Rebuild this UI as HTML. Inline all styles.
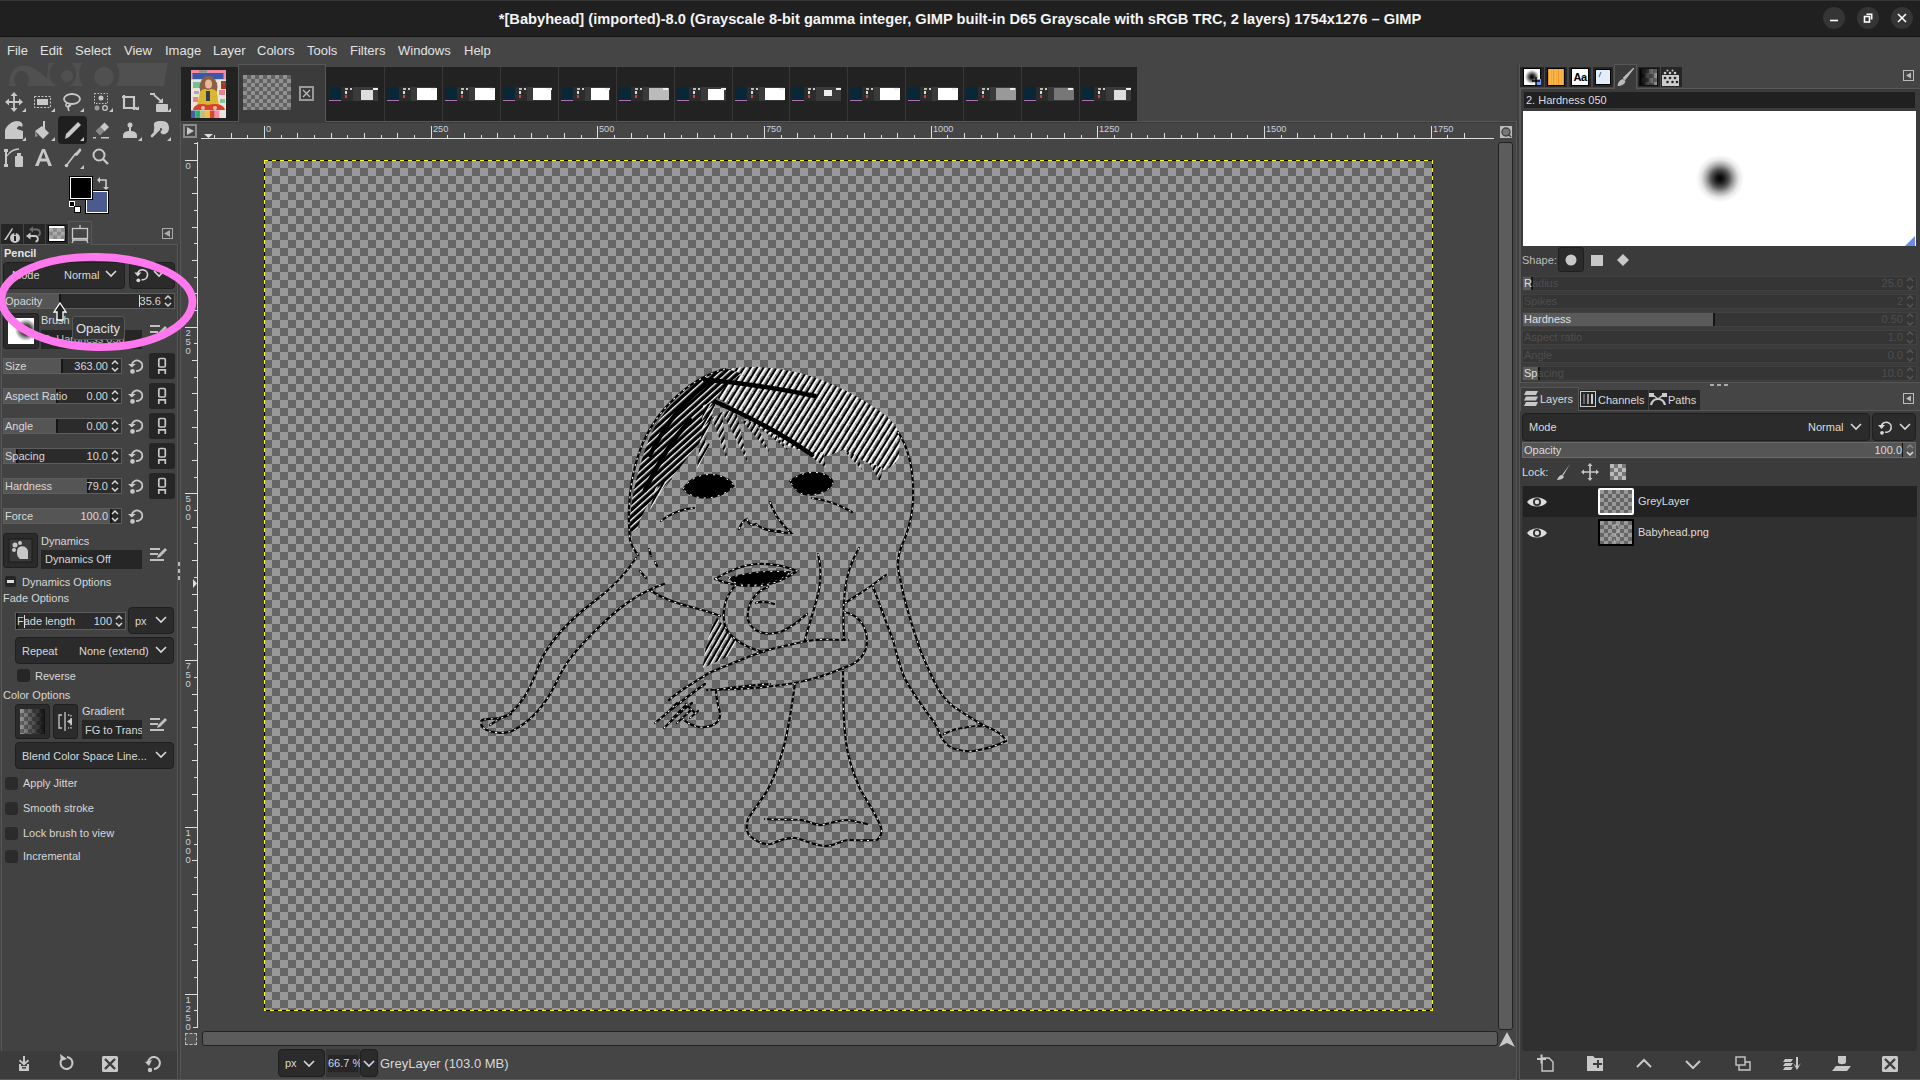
<!DOCTYPE html><html><head><meta charset="utf-8"><style>
*{box-sizing:border-box;margin:0;padding:0}
html,body{width:1920px;height:1080px;overflow:hidden;background:#454545;font-family:"Liberation Sans",sans-serif;color:#dcdcdc;font-size:11px;line-height:1}
.a{position:absolute}
.t{position:absolute;white-space:nowrap;line-height:1}
.chk{background:conic-gradient(#666 25%,#999 0 50%,#666 0 75%,#999 0);background-size:16px 16px}
.cbx{position:absolute;background:#2b2b2b;border:1px solid #1f1f1f;border-radius:4px}
.sl{position:absolute;background:#2b2b2b;border:1px solid #5e5e5e}
.sl .f{position:absolute;left:0;top:0;bottom:0;background:#555}
.sl .k{position:absolute;top:0;bottom:0;width:2px;background:#151515}
.ico{position:absolute;overflow:visible}
</style></head><body>
<div class="a" style="left:0;top:0;width:1920px;height:37px;background:#202020;border-top:1px solid #363636;border-bottom:1px solid #141414"></div>
<div class="t" style="left:0;top:12px;width:1920px;text-align:center;font-weight:bold;font-size:14.65px;color:#f4f4f4">*[Babyhead] (imported)-8.0 (Grayscale 8-bit gamma integer, GIMP built-in D65 Grayscale with sRGB TRC, 2 layers) 1754x1276 – GIMP</div>
<div class="a" style="left:1823px;top:7px;width:22px;height:22px;border-radius:50%;background:#353535"></div>
<div class="a" style="left:1857px;top:7px;width:22px;height:22px;border-radius:50%;background:#353535"></div>
<div class="a" style="left:1891px;top:7px;width:22px;height:22px;border-radius:50%;background:#353535"></div>
<svg class="a" style="left:1820px;top:4px" width="100" height="30"><g stroke="#fff" stroke-width="1.6" fill="none">
<line x1="10" y1="16.5" x2="18" y2="16.5"/>
<rect x="44.5" y="12.5" width="5" height="5.5"/><polyline points="46.5,10.3 51.7,10.3 51.7,15.5"/>
<line x1="78" y1="10" x2="86" y2="18"/><line x1="86" y1="10" x2="78" y2="18"/></g></svg>

<div class="a" style="left:0;top:37px;width:1920px;height:27px;background:#454545"></div>
<div class="t" style="left:7px;top:44px;font-size:13px;color:#e2e2e2">File</div>
<div class="t" style="left:40px;top:44px;font-size:13px;color:#e2e2e2">Edit</div>
<div class="t" style="left:75px;top:44px;font-size:13px;color:#e2e2e2">Select</div>
<div class="t" style="left:124px;top:44px;font-size:13px;color:#e2e2e2">View</div>
<div class="t" style="left:165px;top:44px;font-size:13px;color:#e2e2e2">Image</div>
<div class="t" style="left:213px;top:44px;font-size:13px;color:#e2e2e2">Layer</div>
<div class="t" style="left:257px;top:44px;font-size:13px;color:#e2e2e2">Colors</div>
<div class="t" style="left:307px;top:44px;font-size:13px;color:#e2e2e2">Tools</div>
<div class="t" style="left:350px;top:44px;font-size:13px;color:#e2e2e2">Filters</div>
<div class="t" style="left:398px;top:44px;font-size:13px;color:#e2e2e2">Windows</div>
<div class="t" style="left:464px;top:44px;font-size:13px;color:#e2e2e2">Help</div>
<div class="a" style="left:177px;top:244px;width:1px;height:836px;background:#575757"></div>
<div class="a" style="left:178px;top:244px;width:2px;height:836px;background:#3f3f3f"></div>
<div class="a" style="left:180px;top:122px;width:1px;height:958px;background:#575757"></div>
<div class="a" style="left:178px;top:562px;width:2px;height:4px;background:#bbb"></div><div class="a" style="left:178px;top:569px;width:2px;height:4px;background:#bbb"></div><div class="a" style="left:178px;top:576px;width:2px;height:4px;background:#bbb"></div>
<svg class="a" style="left:0;top:60px" width="177" height="32"><g fill="#505050">
<path d="M9,26 C9,12 15,5.6 23.4,5.6 C33,5.6 40,12 47,18.7 L55.3,26 Z"/><path d="M48.3,2.8 L167.8,2.8 L164,26 L46.5,26 Z"/></g>
<ellipse cx="21.6" cy="19.5" rx="7.3" ry="8.7" fill="#454545"/>
<circle cx="62.8" cy="14" r="13.4" fill="#454545"/><circle cx="67" cy="16" r="6.1" fill="#505050"/>
<circle cx="99.3" cy="14" r="20.1" fill="#454545"/><circle cx="104" cy="16.9" r="9.8" fill="#505050"/>
<rect x="0" y="26" width="177" height="6" fill="#454545"/><rect x="0" y="-10" width="177" height="12.8" fill="#454545"/></svg>
<div class="a" style="left:58px;top:116px;width:29px;height:28px;background:#1f1f1f;border-radius:4px"></div>
<svg class="a" style="left:0;top:0" width="180" height="175"><g fill="none" stroke="#c8c8c8" stroke-width="1.8"><path d="M14,95 V109 M7,102 H21"/></g><g fill="#c8c8c8"><path d="M14,92 l-3.5,4 h7z M14,112 l-3.5,-4 h7z M5,102 l4,-3.5 v7z M23,102 l-4,-3.5 v7z"/></g><path d="M26,112 L26,108 L22,112 Z" fill="#c8c8c8"/><rect x="34.5" y="96.5" width="16" height="11" fill="none" stroke="#c8c8c8" stroke-dasharray="2,1.5"/><rect x="37" y="99" width="11" height="6" fill="#c8c8c8"/><path d="M55,112 L55,108 L51,112 Z" fill="#c8c8c8"/><ellipse cx="72" cy="99" rx="8" ry="5" fill="none" stroke="#c8c8c8" stroke-width="1.8"/><path d="M67,103 C64,106 68,108 70,106 C72,104 66,104 69,111" fill="none" stroke="#c8c8c8" stroke-width="1.6"/><path d="M84,112 L84,108 L80,112 Z" fill="#c8c8c8"/><rect x="94.5" y="93.5" width="13" height="10" fill="none" stroke="#c8c8c8" stroke-dasharray="1.5,1.5"/><circle cx="101" cy="98" r="2.5" fill="#c8c8c8"/><circle cx="97" cy="108" r="2.5" fill="#9a9a9a"/><circle cx="105" cy="108" r="2.3" fill="none" stroke="#c8c8c8" stroke-width="1.3"/><path d="M113,112 L113,108 L109,112 Z" fill="#c8c8c8"/><path d="M124,95 V108 H137 M122,97 H134 V110" fill="none" stroke="#c8c8c8" stroke-width="2.2"/><path d="M139,110 L139,106 L135,110 Z" fill="#c8c8c8"/><rect x="150" y="93" width="5" height="2" fill="#c8c8c8"/><path d="M154,95 L162,102" stroke="#c8c8c8" stroke-width="1.8"/><path d="M163,103 l-5,0 l5,-5z" fill="#c8c8c8"/><rect x="156" y="104" width="12" height="8" rx="1" fill="#c8c8c8"/><path d="M171,112 L171,108 L167,112 Z" fill="#c8c8c8"/><path d="M5,139 L5,130 C7,125 12,121 17,121 C21,121 24,124 22,127 C20,125 17,126 17,129 L23,131 V139 Z" fill="#c8c8c8"/><path d="M26,141 L26,137 L22,141 Z" fill="#c8c8c8"/><path d="M35,131 L42,126 L49,133 L43,139 Z" fill="#c8c8c8"/><path d="M35,131 L35,137 L38,136" fill="#8a8a8a"/><rect x="43" y="121" width="2" height="9" fill="#c8c8c8"/><path d="M55,141 L55,137 L51,141 Z" fill="#c8c8c8"/><path d="M65,139 L66,134 L78,122 L81,125 L69,137 Z" fill="#c8c8c8"/><path d="M84,141 L84,137 L80,141 Z" fill="#c8c8c8"/><path d="M100,127 L104.5,122.5 L109,127 L104.5,131.5 Z" fill="#c8c8c8"/><path d="M95.5,131 L99.5,127 L104,131.5 L100,135.5 Z" fill="#8a8a8a"/><rect x="93" y="137" width="3" height="1.5" fill="#c8c8c8"/><rect x="101" y="137" width="8" height="1.5" fill="#c8c8c8"/><circle cx="130" cy="125" r="2.5" fill="#c8c8c8"/><rect x="129" y="126" width="2" height="5" fill="#c8c8c8"/><path d="M123,136 C123,132 126,131 130,131 C134,131 137,132 137,136 Z" fill="#c8c8c8"/><rect x="123" y="136" width="14" height="2" fill="#c8c8c8"/><path d="M142,141 L142,137 L138,141 Z" fill="#c8c8c8"/><path d="M154,126 C153,121 158,121 162,121 C167,121 169,124 169,128 C169,133 165,135 162,134 C160,133 160,131 162,130 C163,128 160,127 158,129 L154,133 C153,131 155,128 154,126 Z" fill="#c8c8c8"/><path d="M152,136 L159,129" stroke="#c8c8c8" stroke-width="2.6" stroke-linecap="round"/><path d="M171,141 L171,137 L167,141 Z" fill="#c8c8c8"/><rect x="5" y="150" width="2" height="17" fill="#c8c8c8"/><rect x="4" y="149" width="4" height="3" fill="#c8c8c8"/><rect x="4" y="164" width="4" height="3" fill="#c8c8c8"/><path d="M7,156 C11,150 15,149 19,149" fill="none" stroke="#c8c8c8" stroke-width="1.3"/><rect x="15" y="156" width="8" height="11" rx="1" fill="#c8c8c8"/><rect x="17" y="153" width="4" height="3" fill="#c8c8c8"/><path d="M35,166 L42,149 L45,149 L52,166 L48.5,166 L46.8,161.5 L40.2,161.5 L38.5,166 Z M41.2,158.5 L45.8,158.5 L43.5,152 Z" fill="#c8c8c8"/><path d="M66,166 L76,153" stroke="#c8c8c8" stroke-width="1.6"/><circle cx="66.5" cy="165.5" r="1.8" fill="#c8c8c8"/><path d="M74,155 L79,149 C80,148 82,149 81,151 L77,156 Z" fill="#c8c8c8"/><path d="M84,169 L84,165 L80,169 Z" fill="#c8c8c8"/><circle cx="99" cy="155" r="5.5" fill="none" stroke="#c8c8c8" stroke-width="2"/><path d="M103,159 L108,164" stroke="#c8c8c8" stroke-width="2.4"/></svg>
<div class="a" style="left:85px;top:190px;width:24px;height:24px;background:#000;padding:1px"><div style="width:22px;height:22px;border:1px solid #fff;background:#4b5a8f"></div></div>
<div class="a" style="left:69px;top:176px;width:24px;height:24px;background:#000;padding:1px"><div style="width:22px;height:22px;border:1px solid #fff;background:#000"></div></div>
<div class="a" style="left:69px;top:201px;width:6px;height:6px;background:#000;border:1px solid #fff"></div>
<div class="a" style="left:74px;top:206px;width:7px;height:7px;background:#fff;border:1px solid #000"></div>
<svg class="a" style="left:96px;top:176px" width="16" height="16"><path d="M2,4 H10 V12" fill="none" stroke="#ccc" stroke-width="1.6"/><path d="M1,4 l3,-3 v6z M10,14 l-3,-3 h6z" fill="#ccc"/></svg>
<div class="a" style="left:1px;top:224px;width:22px;height:20px;background:#262626"></div>
<div class="a" style="left:24px;top:224px;width:21px;height:20px;background:#262626"></div>
<div class="a" style="left:46px;top:224px;width:22px;height:20px;background:#262626"></div>
<div class="a" style="left:68px;top:221px;width:24px;height:24px;background:#454545;border:1px solid #575757;border-bottom:none"></div>
<div class="a" style="left:1px;top:244px;width:177px;height:807px;border:1px solid #575757;border-bottom:none;background:#424242"></div>
<div class="a" style="left:68px;top:244px;width:23px;height:1px;background:#454545"></div>
<svg class="a" style="left:0;top:220px" width="180" height="26">
<path d="M4,20 L12,8 L13,9 L6,20 Z" fill="#c8c8c8"/><circle cx="15" cy="18" r="5" fill="#c8c8c8"/><rect x="14" y="16" width="2" height="5" fill="#262626"/><circle cx="15" cy="14" r="1" fill="#262626"/>
<path d="M32,9.5 H37 C40.5,9.5 41,15 38,15.5" fill="none" stroke="#6a6a6a" stroke-width="1.8"/><path d="M29,9.5 L33,6.5 V12.5 Z" fill="#6a6a6a"/>
<path d="M29,16 H35 C38.5,16 39,21.5 35.5,21.5" fill="none" stroke="#c8c8c8" stroke-width="1.9"/><path d="M26,16 L30.5,12.5 V19.5 Z" fill="#c8c8c8"/>
<rect x="48" y="5" width="17.5" height="17" rx="1.5" fill="#000"/><rect x="49" y="6" width="15.5" height="15" fill="#fff"/><rect x="49" y="8" width="15.5" height="11" fill="#888"/><g fill="#aaa"><rect x="49" y="8" width="4" height="3.7"/><rect x="57" y="8" width="4" height="3.7"/><rect x="53" y="11.7" width="4" height="3.7"/><rect x="61" y="11.7" width="3.5" height="3.7"/><rect x="49" y="15.4" width="4" height="3.6"/><rect x="57" y="15.4" width="4" height="3.6"/></g>
<rect x="72.5" y="8.5" width="15" height="10" fill="none" stroke="#c8c8c8" stroke-width="1.3"/><path d="M80,5 V8 M74,19 L72,23 M86,19 L88,23 M72,20 H88" stroke="#c8c8c8" stroke-width="1.3"/>
<rect x="162.5" y="8.5" width="10" height="10" fill="none" stroke="#aaa"/><path d="M170,10 V17 L164,13.5 Z" fill="#aaa"/>
</svg>
<div class="t" style="left:4px;top:248px;font-weight:bold;font-size:11px;color:#e6e6e6">Pencil</div>
<div class="cbx" style="left:3px;top:262px;width:122px;height:27px"></div>
<div class="t" style="left:12px;top:270px;color:#d8d8d8">Mode</div><div class="t" style="left:64px;top:270px;color:#d8d8d8">Normal</div>
<div class="cbx" style="left:129px;top:262px;width:46px;height:27px"></div>
<svg class="a" style="left:0;top:260px" width="180" height="30"><g fill="none" stroke="#d8d8d8" stroke-width="1.6"><path d="M106,11 L111,16 L116,11"/><path d="M154,11 L159,16 L164,11"/><path d="M137.8,13 A5,5 0 1 1 141.5,19.6"/></g><path d="M134.3,12.5 L141.3,12.5 L137.8,16.5 Z" fill="#d8d8d8"/><circle cx="138.3" cy="20.3" r="1.9" fill="#d8d8d8"/></svg>
<div class="sl" style="left:3px;top:293px;width:172px;height:16px"><div class="f" style="width:55px;background:#555"></div><div class="k" style="left:55px"></div></div><div class="t" style="left:5px;top:296px;color:#d8d8d8">Opacity</div><div class="t" style="left:91px;width:70px;text-align:right;top:296px;color:#d8d8d8">35.6</div><svg class="a" style="left:163px;top:293.0px" width="10" height="16"><path d="M2,6 L5,3 L8,6 M2,10 L5,13 L8,10" fill="none" stroke="#d8d8d8" stroke-width="1.5"/></svg>
<div class="a" style="left:139px;top:295px;width:1px;height:12px;background:#ddd"></div>
<div class="a" style="left:3px;top:313px;width:36px;height:36px;background:#2b2b2b;border-radius:3px;border:1px solid #1f1f1f"></div>
<div class="a" style="left:8px;top:318px;width:26px;height:26px;background:radial-gradient(circle at 18px 12px,#111 0,#444 5px,#fff 11px)"></div>
<div class="t" style="left:41px;top:315px;color:#d8d8d8">Brush</div>
<div class="a" style="left:41px;top:330px;width:101px;height:19px;background:#262626"></div>
<div class="t" style="left:44px;top:334px;color:#bdbdbd">2. Hardness 050</div>
<svg class="a" style="left:148px;top:322px" width="22" height="26"><g fill="#c0c0c0"><rect x="2" y="3" width="10" height="2"/><rect x="2" y="9" width="8" height="2"/><rect x="2" y="15" width="14" height="2"/><path d="M10,11 L17,4 L19,6 L12,13 L9,14Z"/></g></svg>
<div class="sl" style="left:3px;top:358px;width:119px;height:16px"><div class="f" style="width:57px;background:#555"></div><div class="k" style="left:57px"></div></div><div class="t" style="left:5px;top:361px;color:#d8d8d8">Size</div><div class="t" style="left:38px;width:70px;text-align:right;top:361px;color:#d8d8d8">363.00</div><svg class="a" style="left:110px;top:358.0px" width="10" height="16"><path d="M2,6 L5,3 L8,6 M2,10 L5,13 L8,10" fill="none" stroke="#d8d8d8" stroke-width="1.5"/></svg>
<svg class="a" style="left:126px;top:353px" width="20" height="26"><path d="M5.9,11.4 A5.3,5.3 0 1 1 10.1,17.9" fill="none" stroke="#c8c8c8" stroke-width="1.8"/><path d="M2,11 L9.8,11 L5.8,14.6 Z" fill="#c8c8c8"/><circle cx="6.5" cy="18.4" r="2.3" fill="#c8c8c8"/></svg>
<div class="a" style="left:149px;top:353px;width:26px;height:26px;background:#262626;border-radius:3px"></div>
<svg class="a" style="left:149px;top:353px" width="26" height="26"><g fill="none" stroke="#c8c8c8" stroke-width="1.7"><rect x="9.8" y="5.5" width="6.5" height="8.5" rx="1.2"/><path d="M9.8,21 V16.8 H16.3 V21"/></g></svg>
<div class="sl" style="left:3px;top:388px;width:119px;height:16px"><div class="f" style="width:52px;background:#555"></div><div class="k" style="left:52px"></div></div><div class="t" style="left:5px;top:391px;color:#d8d8d8">Aspect Ratio</div><div class="t" style="left:38px;width:70px;text-align:right;top:391px;color:#d8d8d8">0.00</div><svg class="a" style="left:110px;top:388.0px" width="10" height="16"><path d="M2,6 L5,3 L8,6 M2,10 L5,13 L8,10" fill="none" stroke="#d8d8d8" stroke-width="1.5"/></svg>
<svg class="a" style="left:126px;top:383px" width="20" height="26"><path d="M5.9,11.4 A5.3,5.3 0 1 1 10.1,17.9" fill="none" stroke="#c8c8c8" stroke-width="1.8"/><path d="M2,11 L9.8,11 L5.8,14.6 Z" fill="#c8c8c8"/><circle cx="6.5" cy="18.4" r="2.3" fill="#c8c8c8"/></svg>
<div class="a" style="left:149px;top:383px;width:26px;height:26px;background:#262626;border-radius:3px"></div>
<svg class="a" style="left:149px;top:383px" width="26" height="26"><g fill="none" stroke="#c8c8c8" stroke-width="1.7"><rect x="9.8" y="5.5" width="6.5" height="8.5" rx="1.2"/><path d="M9.8,21 V16.8 H16.3 V21"/></g></svg>
<div class="sl" style="left:3px;top:418px;width:119px;height:16px"><div class="f" style="width:52px;background:#555"></div><div class="k" style="left:52px"></div></div><div class="t" style="left:5px;top:421px;color:#d8d8d8">Angle</div><div class="t" style="left:38px;width:70px;text-align:right;top:421px;color:#d8d8d8">0.00</div><svg class="a" style="left:110px;top:418.0px" width="10" height="16"><path d="M2,6 L5,3 L8,6 M2,10 L5,13 L8,10" fill="none" stroke="#d8d8d8" stroke-width="1.5"/></svg>
<svg class="a" style="left:126px;top:413px" width="20" height="26"><path d="M5.9,11.4 A5.3,5.3 0 1 1 10.1,17.9" fill="none" stroke="#c8c8c8" stroke-width="1.8"/><path d="M2,11 L9.8,11 L5.8,14.6 Z" fill="#c8c8c8"/><circle cx="6.5" cy="18.4" r="2.3" fill="#c8c8c8"/></svg>
<div class="a" style="left:149px;top:413px;width:26px;height:26px;background:#262626;border-radius:3px"></div>
<svg class="a" style="left:149px;top:413px" width="26" height="26"><g fill="none" stroke="#c8c8c8" stroke-width="1.7"><rect x="9.8" y="5.5" width="6.5" height="8.5" rx="1.2"/><path d="M9.8,21 V16.8 H16.3 V21"/></g></svg>
<div class="sl" style="left:3px;top:448px;width:119px;height:16px"><div class="f" style="width:12px;background:#555"></div><div class="k" style="left:12px"></div></div><div class="t" style="left:5px;top:451px;color:#d8d8d8">Spacing</div><div class="t" style="left:38px;width:70px;text-align:right;top:451px;color:#d8d8d8">10.0</div><svg class="a" style="left:110px;top:448.0px" width="10" height="16"><path d="M2,6 L5,3 L8,6 M2,10 L5,13 L8,10" fill="none" stroke="#d8d8d8" stroke-width="1.5"/></svg>
<svg class="a" style="left:126px;top:443px" width="20" height="26"><path d="M5.9,11.4 A5.3,5.3 0 1 1 10.1,17.9" fill="none" stroke="#c8c8c8" stroke-width="1.8"/><path d="M2,11 L9.8,11 L5.8,14.6 Z" fill="#c8c8c8"/><circle cx="6.5" cy="18.4" r="2.3" fill="#c8c8c8"/></svg>
<div class="a" style="left:149px;top:443px;width:26px;height:26px;background:#262626;border-radius:3px"></div>
<svg class="a" style="left:149px;top:443px" width="26" height="26"><g fill="none" stroke="#c8c8c8" stroke-width="1.7"><rect x="9.8" y="5.5" width="6.5" height="8.5" rx="1.2"/><path d="M9.8,21 V16.8 H16.3 V21"/></g></svg>
<div class="sl" style="left:3px;top:478px;width:119px;height:16px"><div class="f" style="width:83px;background:#555"></div><div class="k" style="left:83px"></div></div><div class="t" style="left:5px;top:481px;color:#d8d8d8">Hardness</div><div class="t" style="left:38px;width:70px;text-align:right;top:481px;color:#d8d8d8">79.0</div><svg class="a" style="left:110px;top:478.0px" width="10" height="16"><path d="M2,6 L5,3 L8,6 M2,10 L5,13 L8,10" fill="none" stroke="#d8d8d8" stroke-width="1.5"/></svg>
<svg class="a" style="left:126px;top:473px" width="20" height="26"><path d="M5.9,11.4 A5.3,5.3 0 1 1 10.1,17.9" fill="none" stroke="#c8c8c8" stroke-width="1.8"/><path d="M2,11 L9.8,11 L5.8,14.6 Z" fill="#c8c8c8"/><circle cx="6.5" cy="18.4" r="2.3" fill="#c8c8c8"/></svg>
<div class="a" style="left:149px;top:473px;width:26px;height:26px;background:#262626;border-radius:3px"></div>
<svg class="a" style="left:149px;top:473px" width="26" height="26"><g fill="none" stroke="#c8c8c8" stroke-width="1.7"><rect x="9.8" y="5.5" width="6.5" height="8.5" rx="1.2"/><path d="M9.8,21 V16.8 H16.3 V21"/></g></svg>
<div class="sl" style="left:3px;top:508px;width:119px;height:16px"><div class="f" style="width:106px;background:#555"></div><div class="k" style="left:106px"></div></div><div class="t" style="left:5px;top:511px;color:#d8d8d8">Force</div><div class="t" style="left:38px;width:70px;text-align:right;top:511px;color:#d8d8d8">100.0</div><svg class="a" style="left:110px;top:508.0px" width="10" height="16"><path d="M2,6 L5,3 L8,6 M2,10 L5,13 L8,10" fill="none" stroke="#d8d8d8" stroke-width="1.5"/></svg>
<svg class="a" style="left:126px;top:503px" width="20" height="26"><path d="M5.9,11.4 A5.3,5.3 0 1 1 10.1,17.9" fill="none" stroke="#c8c8c8" stroke-width="1.8"/><path d="M2,11 L9.8,11 L5.8,14.6 Z" fill="#c8c8c8"/><circle cx="6.5" cy="18.4" r="2.3" fill="#c8c8c8"/></svg>
<div class="a" style="left:3px;top:533px;width:35px;height:35px;background:#2b2b2b;border-radius:3px;border:1px solid #1f1f1f"></div>
<svg class="a" style="left:3px;top:533px" width="35" height="35"><rect x="6" y="6" width="23" height="23" fill="#3a3a3a" stroke="#1a1a1a"/><g fill="#c8c8c8"><circle cx="12" cy="12" r="2.5"/><circle cx="17" cy="10" r="2"/><circle cx="11" cy="17" r="2"/><path d="M15,15 C18,12 24,13 25,18 L25,26 L17,26 C14,24 13,19 15,15Z"/></g></svg>
<div class="t" style="left:41px;top:536px;color:#d8d8d8">Dynamics</div>
<div class="a" style="left:41px;top:550px;width:101px;height:19px;background:#262626"></div>
<div class="t" style="left:45px;top:554px;color:#d8d8d8">Dynamics Off</div>
<svg class="a" style="left:148px;top:543px" width="22" height="26"><g fill="#c0c0c0"><rect x="2" y="5" width="10" height="2"/><rect x="2" y="10" width="8" height="2"/><rect x="2" y="16" width="14" height="2"/><path d="M10,12 L17,5 L19,7 L12,14 L9,15Z"/></g></svg>
<div class="a" style="left:5px;top:576px;width:11px;height:11px;background:#262626;border-radius:2px"></div><div class="a" style="left:7px;top:580px;width:7px;height:3px;background:#e0e0e0"></div>
<div class="t" style="left:22px;top:577px;color:#d8d8d8">Dynamics Options</div>
<div class="t" style="left:3px;top:593px;color:#d8d8d8">Fade Options</div>
<div class="sl" style="left:15px;top:612px;width:111px;height:18px"><div class="f" style="width:0px;background:#555"></div><div class="k" style="left:0px"></div></div><div class="t" style="left:17px;top:616px;color:#d8d8d8">Fade length</div><div class="t" style="left:42px;width:70px;text-align:right;top:616px;color:#d8d8d8">100</div><svg class="a" style="left:114px;top:613.0px" width="10" height="16"><path d="M2,6 L5,3 L8,6 M2,10 L5,13 L8,10" fill="none" stroke="#d8d8d8" stroke-width="1.5"/></svg>
<div class="a" style="left:24px;top:615px;width:1px;height:13px;background:#ddd"></div>
<div class="cbx" style="left:128px;top:607px;width:46px;height:27px"></div><div class="t" style="left:135px;top:616px;color:#d8d8d8">px</div>
<div class="cbx" style="left:15px;top:637px;width:159px;height:27px"></div><div class="t" style="left:22px;top:646px;color:#d8d8d8">Repeat</div><div class="t" style="left:79px;top:646px;color:#d8d8d8">None (extend)</div>
<svg class="a" style="left:0;top:600px" width="180" height="70"><g fill="none" stroke="#d8d8d8" stroke-width="1.6"><path d="M156,17 L161,22 L166,17"/><path d="M156,47 L161,52 L166,47"/></g></svg>
<div class="a" style="left:17px;top:669px;width:13px;height:13px;background:#262626;border-radius:3px"></div>
<div class="t" style="left:35px;top:671px;color:#d8d8d8">Reverse</div>
<div class="t" style="left:3px;top:690px;color:#d8d8d8">Color Options</div>
<div class="a" style="left:15px;top:704px;width:35px;height:35px;background:#2b2b2b;border-radius:3px;border:1px solid #1f1f1f"></div>
<div class="a" style="left:20px;top:709px;width:25px;height:25px;background:linear-gradient(90deg,rgba(255,255,255,0) ,#111),conic-gradient(#666 25%,#999 0 50%,#666 0 75%,#999 0);background-size:auto,8px 8px"></div>
<div class="a" style="left:53px;top:704px;width:25px;height:35px;background:#2b2b2b;border-radius:3px;border:1px solid #1f1f1f"></div>
<svg class="a" style="left:53px;top:704px" width="25" height="35"><g fill="none" stroke="#c8c8c8" stroke-width="1.3"><path d="M9,11 H6 V24 H9"/><path d="M12,8 V27"/><path d="M15,11 H18 V24 H15" stroke-dasharray="1.5,1.5"/></g><path d="M19,14 V21 L14,17.5Z" fill="#c8c8c8"/></svg>
<div class="t" style="left:82px;top:706px;color:#d8d8d8">Gradient</div>
<div class="a" style="left:82px;top:720px;width:60px;height:19px;background:#262626"></div>
<div class="t" style="left:85px;top:725px;width:57px;overflow:hidden;color:#d8d8d8">FG to Transparent</div>
<svg class="a" style="left:148px;top:713px" width="22" height="26"><g fill="#c0c0c0"><rect x="2" y="5" width="10" height="2"/><rect x="2" y="10" width="8" height="2"/><rect x="2" y="16" width="14" height="2"/><path d="M10,12 L17,5 L19,7 L12,14 L9,15Z"/></g></svg>
<div class="cbx" style="left:15px;top:742px;width:159px;height:27px"></div><div class="t" style="left:22px;top:751px;color:#d8d8d8">Blend Color Space Line...</div>
<svg class="a" style="left:0;top:740px" width="180" height="30"><path d="M156,12 L161,17 L166,12" fill="none" stroke="#d8d8d8" stroke-width="1.6"/></svg>
<div class="a" style="left:5px;top:777px;width:13px;height:13px;background:#2b2b2b;border-radius:3px"></div><div class="t" style="left:23px;top:778px;color:#d8d8d8">Apply Jitter</div>
<div class="a" style="left:5px;top:802px;width:13px;height:13px;background:#2b2b2b;border-radius:3px"></div><div class="t" style="left:23px;top:803px;color:#d8d8d8">Smooth stroke</div>
<div class="a" style="left:5px;top:827px;width:13px;height:13px;background:#2b2b2b;border-radius:3px"></div><div class="t" style="left:23px;top:828px;color:#d8d8d8">Lock brush to view</div>
<div class="a" style="left:5px;top:850px;width:13px;height:13px;background:#2b2b2b;border-radius:3px"></div><div class="t" style="left:23px;top:851px;color:#d8d8d8">Incremental</div>
<div class="a" style="left:0;top:1051px;width:177px;height:28px;background:#3c3c3c"></div>
<div class="a" style="left:0;top:1079px;width:1920px;height:1px;background:#5a5a5a"></div>
<svg class="a" style="left:0;top:1050px" width="177" height="30"><g fill="#c8c8c8">
<path d="M23,6 H25 V12 L28,9.5 L29,11 L24,15.5 L19,11 L20,9.5 L23,12 Z"/><path d="M19,14 H21 V16 H27 V14 H29 V21 H19 Z"/><rect x="22" y="17" width="4" height="1.5" fill="#3c3c3c"/>
</g><g fill="none" stroke="#c8c8c8" stroke-width="2"><path d="M62,9 A6,6 0 1 0 67,7"/><path d="M148,12 A6,6 0 1 1 154,19"/></g>
<path d="M60,4 L61,11 L67,9 Z" fill="#c8c8c8"/><path d="M145,12 L152,10 L149,16Z" fill="#c8c8c8"/><circle cx="150" cy="20" r="2.2" fill="#c8c8c8"/>
<rect x="102" y="6" width="16" height="16" rx="1.5" fill="#c8c8c8"/><path d="M105,9 L115,19 M115,9 L105,19" stroke="#3c3c3c" stroke-width="2.4"/>
</svg>
<div class="a" style="left:72px;top:316px;width:53px;height:24px;background:#353535;border:1px solid #585858;border-radius:3px"></div>
<div class="t" style="left:76px;top:322px;font-size:13px;color:#e0e0e0">Opacity</div>
<svg class="a" style="left:51px;top:300px" width="20" height="24"><path d="M9,3 L15,12 L12,12 L12,20 L6,20 L6,12 L3,12 Z" fill="#222" stroke="#fff" stroke-width="1.3" stroke-linejoin="miter"/></svg>
<svg class="a" style="left:0;top:240px;z-index:5" width="215" height="125"><path d="M1.5,60 A95.5,43 0 0 1 192.5,60 A95.5,47 0 0 1 1.5,60 Z" fill="none" stroke="#ff78ee" stroke-width="7.8" transform="rotate(1 97 60)"/></svg>
<div class="a" style="left:181px;top:67px;width:956px;height:54px;background:#222"></div>
<div class="a" style="left:181px;top:121px;width:1336px;height:1px;background:#575757"></div>
<svg class="a" style="left:191px;top:70px" width="35" height="48">
<rect width="35" height="48" fill="#efe2d8"/><rect width="35" height="9.5" fill="#f28aa2"/>
<rect x="1.5" y="3" width="31" height="6" fill="#3a58a8"/><rect x="8" y="0.5" width="8" height="2" fill="#40b080"/>
<rect x="2" y="12" width="7" height="6" fill="#50b888" opacity=".8"/><rect x="3" y="21" width="5" height="3" fill="#8090c0" opacity=".7"/><rect x="2" y="27" width="5" height="5" fill="#d86070" opacity=".7"/>
<rect x="28" y="20" width="6" height="5" fill="#d86070" opacity=".7"/><rect x="29" y="29" width="5" height="4" fill="#60c090" opacity=".8"/>
<rect x="30" y="11" width="5" height="8" fill="#b03028"/><circle cx="32.5" cy="13" r="2" fill="#8a5030"/>
<ellipse cx="17.5" cy="17" rx="9" ry="11" fill="#8a6040"/><ellipse cx="17.5" cy="14" rx="3.5" ry="4.5" fill="#e8b898"/>
<path d="M6,35 L9,22 C11,19 14,18 17,20 C20,18 24,19 26,22 L28,36 Z" fill="#d8b830"/><rect x="15" y="21" width="4" height="10" fill="#3a3a50"/>
<path d="M2,40 C3,34 10,33 17,35 C24,33 33,34 34,40 Z" fill="#d84030"/><circle cx="12" cy="38" r="2" fill="#e8b898"/><circle cx="24" cy="38" r="2" fill="#e8b898"/>
<rect x="0" y="40.5" width="4.5" height="7.5" fill="#4a5aa0"/><rect x="4.5" y="40.5" width="4.8" height="7.5" fill="#28b07c"/><rect x="9.3" y="40.5" width="4.8" height="7.5" fill="#c4bc7c"/><rect x="14.1" y="40.5" width="4.8" height="7.5" fill="#f0c040"/><rect x="18.9" y="40.5" width="4.8" height="7.5" fill="#d44838"/><rect x="23.7" y="40.5" width="4.8" height="7.5" fill="#f290a8"/><rect x="28.5" y="40.5" width="6.5" height="7.5" fill="#efe2d8"/>
</svg>
<div class="a" style="left:238px;top:64px;width:88px;height:58px;background:#3b3b3b;border:1px solid #575757;border-bottom:none"></div>
<div class="a chk" style="left:243px;top:75px;width:48px;height:35px;background-size:8px 8px;opacity:.9"></div>
<div class="a" style="left:299px;top:86px;width:15px;height:15px;border:2px solid #9a9a9a"></div><svg class="a" style="left:299px;top:86px" width="15" height="15"><path d="M4,4 L11,11 M11,4 L4,11" stroke="#bbb" stroke-width="1.3"/></svg>
<div class="a" style="left:329px;top:87px;width:49px;height:14px;background:#3a3a3a">
<div class="a" style="left:0;top:0;width:12px;height:13px;background:#082838"></div>
<div class="a" style="left:12px;top:0;width:12px;height:14px;background:#2c2c2c"></div>
<div class="a" style="left:16px;top:1px;width:3px;height:2px;background:#c8b8a0"></div><div class="a" style="left:21px;top:1px;width:2px;height:2px;background:#ccc"></div>
<div class="a" style="left:16px;top:4px;width:2px;height:3px;background:#ddd"></div><div class="a" style="left:16px;top:8px;width:2px;height:3px;background:#c44"></div>
<div class="a" style="left:0;top:13px;width:12px;height:1px;background:#b070b0"></div>
<div class="a" style="left:32px;top:3px;width:12px;height:10px;background:#ddd"></div>
<div class="a" style="left:44px;top:1px;width:5px;height:2px;background:#eee"></div>
</div>
<div class="a" style="left:384px;top:67px;width:1px;height:54px;background:#383838"></div>
<div class="a" style="left:387px;top:87px;width:49px;height:14px;background:#3a3a3a">
<div class="a" style="left:0;top:0;width:12px;height:13px;background:#082838"></div>
<div class="a" style="left:12px;top:0;width:12px;height:14px;background:#2c2c2c"></div>
<div class="a" style="left:16px;top:1px;width:3px;height:2px;background:#c8b8a0"></div><div class="a" style="left:21px;top:1px;width:2px;height:2px;background:#ccc"></div>
<div class="a" style="left:16px;top:4px;width:2px;height:3px;background:#ddd"></div><div class="a" style="left:16px;top:8px;width:2px;height:3px;background:#c44"></div>
<div class="a" style="left:0;top:13px;width:12px;height:1px;background:#b070b0"></div>
<div class="a" style="left:30px;top:1px;width:20px;height:12px;background:#fff"></div>
<div class="a" style="left:44px;top:1px;width:5px;height:2px;background:#eee"></div>
</div>
<div class="a" style="left:442px;top:67px;width:1px;height:54px;background:#383838"></div>
<div class="a" style="left:445px;top:87px;width:49px;height:14px;background:#3a3a3a">
<div class="a" style="left:0;top:0;width:12px;height:13px;background:#082838"></div>
<div class="a" style="left:12px;top:0;width:12px;height:14px;background:#2c2c2c"></div>
<div class="a" style="left:16px;top:1px;width:3px;height:2px;background:#c8b8a0"></div><div class="a" style="left:21px;top:1px;width:2px;height:2px;background:#ccc"></div>
<div class="a" style="left:16px;top:4px;width:2px;height:3px;background:#ddd"></div><div class="a" style="left:16px;top:8px;width:2px;height:3px;background:#c44"></div>
<div class="a" style="left:0;top:13px;width:12px;height:1px;background:#b070b0"></div>
<div class="a" style="left:30px;top:1px;width:20px;height:12px;background:#fff"></div>
<div class="a" style="left:44px;top:1px;width:5px;height:2px;background:#eee"></div>
</div>
<div class="a" style="left:500px;top:67px;width:1px;height:54px;background:#383838"></div>
<div class="a" style="left:503px;top:87px;width:49px;height:14px;background:#3a3a3a">
<div class="a" style="left:0;top:0;width:12px;height:13px;background:#082838"></div>
<div class="a" style="left:12px;top:0;width:12px;height:14px;background:#2c2c2c"></div>
<div class="a" style="left:16px;top:1px;width:3px;height:2px;background:#c8b8a0"></div><div class="a" style="left:21px;top:1px;width:2px;height:2px;background:#ccc"></div>
<div class="a" style="left:16px;top:4px;width:2px;height:3px;background:#ddd"></div><div class="a" style="left:16px;top:8px;width:2px;height:3px;background:#c44"></div>
<div class="a" style="left:0;top:13px;width:12px;height:1px;background:#b070b0"></div>
<div class="a" style="left:30px;top:1px;width:18px;height:12px;background:#fff"></div>
<div class="a" style="left:44px;top:1px;width:5px;height:2px;background:#eee"></div>
</div>
<div class="a" style="left:558px;top:67px;width:1px;height:54px;background:#383838"></div>
<div class="a" style="left:561px;top:87px;width:49px;height:14px;background:#3a3a3a">
<div class="a" style="left:0;top:0;width:12px;height:13px;background:#082838"></div>
<div class="a" style="left:12px;top:0;width:12px;height:14px;background:#2c2c2c"></div>
<div class="a" style="left:16px;top:1px;width:3px;height:2px;background:#c8b8a0"></div><div class="a" style="left:21px;top:1px;width:2px;height:2px;background:#ccc"></div>
<div class="a" style="left:16px;top:4px;width:2px;height:3px;background:#ddd"></div><div class="a" style="left:16px;top:8px;width:2px;height:3px;background:#c44"></div>
<div class="a" style="left:0;top:13px;width:12px;height:1px;background:#b070b0"></div>
<div class="a" style="left:30px;top:1px;width:18px;height:12px;background:#fff"></div>
<div class="a" style="left:44px;top:1px;width:5px;height:2px;background:#eee"></div>
</div>
<div class="a" style="left:616px;top:67px;width:1px;height:54px;background:#383838"></div>
<div class="a" style="left:619px;top:87px;width:49px;height:14px;background:#3a3a3a">
<div class="a" style="left:0;top:0;width:12px;height:13px;background:#082838"></div>
<div class="a" style="left:12px;top:0;width:12px;height:14px;background:#2c2c2c"></div>
<div class="a" style="left:16px;top:1px;width:3px;height:2px;background:#c8b8a0"></div><div class="a" style="left:21px;top:1px;width:2px;height:2px;background:#ccc"></div>
<div class="a" style="left:16px;top:4px;width:2px;height:3px;background:#ddd"></div><div class="a" style="left:16px;top:8px;width:2px;height:3px;background:#c44"></div>
<div class="a" style="left:0;top:13px;width:12px;height:1px;background:#b070b0"></div>
<div class="a" style="left:30px;top:1px;width:20px;height:12px;background:#bbb"></div>
<div class="a" style="left:44px;top:1px;width:5px;height:2px;background:#eee"></div>
</div>
<div class="a" style="left:674px;top:67px;width:1px;height:54px;background:#383838"></div>
<div class="a" style="left:677px;top:87px;width:49px;height:14px;background:#3a3a3a">
<div class="a" style="left:0;top:0;width:12px;height:13px;background:#082838"></div>
<div class="a" style="left:12px;top:0;width:12px;height:14px;background:#2c2c2c"></div>
<div class="a" style="left:16px;top:1px;width:3px;height:2px;background:#c8b8a0"></div><div class="a" style="left:21px;top:1px;width:2px;height:2px;background:#ccc"></div>
<div class="a" style="left:16px;top:4px;width:2px;height:3px;background:#ddd"></div><div class="a" style="left:16px;top:8px;width:2px;height:3px;background:#c44"></div>
<div class="a" style="left:0;top:13px;width:12px;height:1px;background:#b070b0"></div>
<div class="a" style="left:31px;top:2px;width:16px;height:11px;background:#fff"></div>
<div class="a" style="left:44px;top:1px;width:5px;height:2px;background:#eee"></div>
</div>
<div class="a" style="left:732px;top:67px;width:1px;height:54px;background:#383838"></div>
<div class="a" style="left:735px;top:87px;width:49px;height:14px;background:#3a3a3a">
<div class="a" style="left:0;top:0;width:12px;height:13px;background:#082838"></div>
<div class="a" style="left:12px;top:0;width:12px;height:14px;background:#2c2c2c"></div>
<div class="a" style="left:16px;top:1px;width:3px;height:2px;background:#c8b8a0"></div><div class="a" style="left:21px;top:1px;width:2px;height:2px;background:#ccc"></div>
<div class="a" style="left:16px;top:4px;width:2px;height:3px;background:#ddd"></div><div class="a" style="left:16px;top:8px;width:2px;height:3px;background:#c44"></div>
<div class="a" style="left:0;top:13px;width:12px;height:1px;background:#b070b0"></div>
<div class="a" style="left:30px;top:1px;width:20px;height:12px;background:#fff"></div>
<div class="a" style="left:44px;top:1px;width:5px;height:2px;background:#eee"></div>
</div>
<div class="a" style="left:789px;top:67px;width:1px;height:54px;background:#383838"></div>
<div class="a" style="left:792px;top:87px;width:49px;height:14px;background:#3a3a3a">
<div class="a" style="left:0;top:0;width:12px;height:13px;background:#082838"></div>
<div class="a" style="left:12px;top:0;width:12px;height:14px;background:#2c2c2c"></div>
<div class="a" style="left:16px;top:1px;width:3px;height:2px;background:#c8b8a0"></div><div class="a" style="left:21px;top:1px;width:2px;height:2px;background:#ccc"></div>
<div class="a" style="left:16px;top:4px;width:2px;height:3px;background:#ddd"></div><div class="a" style="left:16px;top:8px;width:2px;height:3px;background:#c44"></div>
<div class="a" style="left:0;top:13px;width:12px;height:1px;background:#b070b0"></div>
<div class="a" style="left:32px;top:3px;width:8px;height:6px;background:#eee"></div>
<div class="a" style="left:44px;top:1px;width:5px;height:2px;background:#eee"></div>
</div>
<div class="a" style="left:847px;top:67px;width:1px;height:54px;background:#383838"></div>
<div class="a" style="left:850px;top:87px;width:49px;height:14px;background:#3a3a3a">
<div class="a" style="left:0;top:0;width:12px;height:13px;background:#082838"></div>
<div class="a" style="left:12px;top:0;width:12px;height:14px;background:#2c2c2c"></div>
<div class="a" style="left:16px;top:1px;width:3px;height:2px;background:#c8b8a0"></div><div class="a" style="left:21px;top:1px;width:2px;height:2px;background:#ccc"></div>
<div class="a" style="left:16px;top:4px;width:2px;height:3px;background:#ddd"></div><div class="a" style="left:16px;top:8px;width:2px;height:3px;background:#c44"></div>
<div class="a" style="left:0;top:13px;width:12px;height:1px;background:#b070b0"></div>
<div class="a" style="left:30px;top:1px;width:20px;height:12px;background:#fff"></div>
<div class="a" style="left:44px;top:1px;width:5px;height:2px;background:#eee"></div>
</div>
<div class="a" style="left:905px;top:67px;width:1px;height:54px;background:#383838"></div>
<div class="a" style="left:908px;top:87px;width:49px;height:14px;background:#3a3a3a">
<div class="a" style="left:0;top:0;width:12px;height:13px;background:#082838"></div>
<div class="a" style="left:12px;top:0;width:12px;height:14px;background:#2c2c2c"></div>
<div class="a" style="left:16px;top:1px;width:3px;height:2px;background:#c8b8a0"></div><div class="a" style="left:21px;top:1px;width:2px;height:2px;background:#ccc"></div>
<div class="a" style="left:16px;top:4px;width:2px;height:3px;background:#ddd"></div><div class="a" style="left:16px;top:8px;width:2px;height:3px;background:#c44"></div>
<div class="a" style="left:0;top:13px;width:12px;height:1px;background:#b070b0"></div>
<div class="a" style="left:30px;top:1px;width:20px;height:12px;background:#fff"></div>
<div class="a" style="left:44px;top:1px;width:5px;height:2px;background:#eee"></div>
</div>
<div class="a" style="left:963px;top:67px;width:1px;height:54px;background:#383838"></div>
<div class="a" style="left:966px;top:87px;width:49px;height:14px;background:#3a3a3a">
<div class="a" style="left:0;top:0;width:12px;height:13px;background:#082838"></div>
<div class="a" style="left:12px;top:0;width:12px;height:14px;background:#2c2c2c"></div>
<div class="a" style="left:16px;top:1px;width:3px;height:2px;background:#c8b8a0"></div><div class="a" style="left:21px;top:1px;width:2px;height:2px;background:#ccc"></div>
<div class="a" style="left:16px;top:4px;width:2px;height:3px;background:#ddd"></div><div class="a" style="left:16px;top:8px;width:2px;height:3px;background:#c44"></div>
<div class="a" style="left:0;top:13px;width:12px;height:1px;background:#b070b0"></div>
<div class="a" style="left:30px;top:1px;width:20px;height:12px;background:#999"></div>
<div class="a" style="left:44px;top:1px;width:5px;height:2px;background:#eee"></div>
</div>
<div class="a" style="left:1021px;top:67px;width:1px;height:54px;background:#383838"></div>
<div class="a" style="left:1024px;top:87px;width:49px;height:14px;background:#3a3a3a">
<div class="a" style="left:0;top:0;width:12px;height:13px;background:#082838"></div>
<div class="a" style="left:12px;top:0;width:12px;height:14px;background:#2c2c2c"></div>
<div class="a" style="left:16px;top:1px;width:3px;height:2px;background:#c8b8a0"></div><div class="a" style="left:21px;top:1px;width:2px;height:2px;background:#ccc"></div>
<div class="a" style="left:16px;top:4px;width:2px;height:3px;background:#ddd"></div><div class="a" style="left:16px;top:8px;width:2px;height:3px;background:#c44"></div>
<div class="a" style="left:0;top:13px;width:12px;height:1px;background:#b070b0"></div>
<div class="a" style="left:30px;top:1px;width:20px;height:12px;background:#777"></div>
<div class="a" style="left:44px;top:1px;width:5px;height:2px;background:#eee"></div>
</div>
<div class="a" style="left:1079px;top:67px;width:1px;height:54px;background:#383838"></div>
<div class="a" style="left:1082px;top:87px;width:49px;height:14px;background:#3a3a3a">
<div class="a" style="left:0;top:0;width:12px;height:13px;background:#082838"></div>
<div class="a" style="left:12px;top:0;width:12px;height:14px;background:#2c2c2c"></div>
<div class="a" style="left:16px;top:1px;width:3px;height:2px;background:#c8b8a0"></div><div class="a" style="left:21px;top:1px;width:2px;height:2px;background:#ccc"></div>
<div class="a" style="left:16px;top:4px;width:2px;height:3px;background:#ddd"></div><div class="a" style="left:16px;top:8px;width:2px;height:3px;background:#c44"></div>
<div class="a" style="left:0;top:13px;width:12px;height:1px;background:#b070b0"></div>
<div class="a" style="left:32px;top:3px;width:12px;height:10px;background:#ddd"></div>
<div class="a" style="left:44px;top:1px;width:5px;height:2px;background:#eee"></div>
</div>
<div class="a" style="left:181px;top:122px;width:1336px;height:1px;background:#3a3a3a"></div>
<div class="a" style="left:183px;top:124px;width:14px;height:14px;border:2px solid #8a8a8a"></div><svg class="a" style="left:183px;top:124px" width="14" height="14"><path d="M4,3 L11,7 L4,11 Z" fill="#c8c8c8"/></svg>
<svg class="a" style="left:0;top:0" width="1520" height="1080"><rect x="201" y="138" width="1293" height="1" fill="#ddd"/><rect x="214" y="135" width="1" height="3" fill="#ddd"/><rect x="231" y="133" width="1" height="5" fill="#ddd"/><rect x="247" y="135" width="1" height="3" fill="#ddd"/><rect x="264" y="126" width="1" height="12" fill="#ddd"/><text x="266" y="132.3" font-size="9.2" fill="#c8d0dc" font-family="Liberation Sans">0</text><rect x="281" y="135" width="1" height="3" fill="#ddd"/><rect x="297" y="133" width="1" height="5" fill="#ddd"/><rect x="314" y="135" width="1" height="3" fill="#ddd"/><rect x="331" y="133" width="1" height="5" fill="#ddd"/><rect x="347" y="135" width="1" height="3" fill="#ddd"/><rect x="364" y="133" width="1" height="5" fill="#ddd"/><rect x="381" y="135" width="1" height="3" fill="#ddd"/><rect x="397" y="133" width="1" height="5" fill="#ddd"/><rect x="414" y="135" width="1" height="3" fill="#ddd"/><rect x="431" y="126" width="1" height="12" fill="#ddd"/><text x="433" y="132.3" font-size="9.2" fill="#c8d0dc" font-family="Liberation Sans">250</text><rect x="447" y="135" width="1" height="3" fill="#ddd"/><rect x="464" y="133" width="1" height="5" fill="#ddd"/><rect x="481" y="135" width="1" height="3" fill="#ddd"/><rect x="497" y="133" width="1" height="5" fill="#ddd"/><rect x="514" y="135" width="1" height="3" fill="#ddd"/><rect x="531" y="133" width="1" height="5" fill="#ddd"/><rect x="547" y="135" width="1" height="3" fill="#ddd"/><rect x="564" y="133" width="1" height="5" fill="#ddd"/><rect x="581" y="135" width="1" height="3" fill="#ddd"/><rect x="597" y="126" width="1" height="12" fill="#ddd"/><text x="599" y="132.3" font-size="9.2" fill="#c8d0dc" font-family="Liberation Sans">500</text><rect x="614" y="135" width="1" height="3" fill="#ddd"/><rect x="631" y="133" width="1" height="5" fill="#ddd"/><rect x="647" y="135" width="1" height="3" fill="#ddd"/><rect x="664" y="133" width="1" height="5" fill="#ddd"/><rect x="681" y="135" width="1" height="3" fill="#ddd"/><rect x="697" y="133" width="1" height="5" fill="#ddd"/><rect x="714" y="135" width="1" height="3" fill="#ddd"/><rect x="731" y="133" width="1" height="5" fill="#ddd"/><rect x="747" y="135" width="1" height="3" fill="#ddd"/><rect x="764" y="126" width="1" height="12" fill="#ddd"/><text x="766" y="132.3" font-size="9.2" fill="#c8d0dc" font-family="Liberation Sans">750</text><rect x="781" y="135" width="1" height="3" fill="#ddd"/><rect x="797" y="133" width="1" height="5" fill="#ddd"/><rect x="814" y="135" width="1" height="3" fill="#ddd"/><rect x="831" y="133" width="1" height="5" fill="#ddd"/><rect x="847" y="135" width="1" height="3" fill="#ddd"/><rect x="864" y="133" width="1" height="5" fill="#ddd"/><rect x="881" y="135" width="1" height="3" fill="#ddd"/><rect x="897" y="133" width="1" height="5" fill="#ddd"/><rect x="914" y="135" width="1" height="3" fill="#ddd"/><rect x="931" y="126" width="1" height="12" fill="#ddd"/><text x="933" y="132.3" font-size="9.2" fill="#c8d0dc" font-family="Liberation Sans">1000</text><rect x="947" y="135" width="1" height="3" fill="#ddd"/><rect x="964" y="133" width="1" height="5" fill="#ddd"/><rect x="981" y="135" width="1" height="3" fill="#ddd"/><rect x="997" y="133" width="1" height="5" fill="#ddd"/><rect x="1014" y="135" width="1" height="3" fill="#ddd"/><rect x="1031" y="133" width="1" height="5" fill="#ddd"/><rect x="1047" y="135" width="1" height="3" fill="#ddd"/><rect x="1064" y="133" width="1" height="5" fill="#ddd"/><rect x="1081" y="135" width="1" height="3" fill="#ddd"/><rect x="1097" y="126" width="1" height="12" fill="#ddd"/><text x="1099" y="132.3" font-size="9.2" fill="#c8d0dc" font-family="Liberation Sans">1250</text><rect x="1114" y="135" width="1" height="3" fill="#ddd"/><rect x="1131" y="133" width="1" height="5" fill="#ddd"/><rect x="1147" y="135" width="1" height="3" fill="#ddd"/><rect x="1164" y="133" width="1" height="5" fill="#ddd"/><rect x="1181" y="135" width="1" height="3" fill="#ddd"/><rect x="1197" y="133" width="1" height="5" fill="#ddd"/><rect x="1214" y="135" width="1" height="3" fill="#ddd"/><rect x="1231" y="133" width="1" height="5" fill="#ddd"/><rect x="1247" y="135" width="1" height="3" fill="#ddd"/><rect x="1264" y="126" width="1" height="12" fill="#ddd"/><text x="1266" y="132.3" font-size="9.2" fill="#c8d0dc" font-family="Liberation Sans">1500</text><rect x="1281" y="135" width="1" height="3" fill="#ddd"/><rect x="1297" y="133" width="1" height="5" fill="#ddd"/><rect x="1314" y="135" width="1" height="3" fill="#ddd"/><rect x="1331" y="133" width="1" height="5" fill="#ddd"/><rect x="1347" y="135" width="1" height="3" fill="#ddd"/><rect x="1364" y="133" width="1" height="5" fill="#ddd"/><rect x="1381" y="135" width="1" height="3" fill="#ddd"/><rect x="1397" y="133" width="1" height="5" fill="#ddd"/><rect x="1414" y="135" width="1" height="3" fill="#ddd"/><rect x="1431" y="126" width="1" height="12" fill="#ddd"/><text x="1433" y="132.3" font-size="9.2" fill="#c8d0dc" font-family="Liberation Sans">1750</text><rect x="1447" y="135" width="1" height="3" fill="#ddd"/><rect x="1464" y="133" width="1" height="5" fill="#ddd"/><path d="M204,134 L213,134 L208.5,138 Z" fill="#ddd"/><rect x="197" y="142" width="1" height="886" fill="#ddd"/><rect x="193" y="1027" width="4" height="1" fill="#ddd"/><rect x="194" y="143" width="3" height="1" fill="#ddd"/><rect x="185" y="160" width="12" height="1" fill="#ddd"/><text x="185.5" y="169.3" font-size="9.5" fill="#c8d0dc" font-family="Liberation Sans">0</text><rect x="194" y="177" width="3" height="1" fill="#ddd"/><rect x="192" y="193" width="5" height="1" fill="#ddd"/><rect x="194" y="210" width="3" height="1" fill="#ddd"/><rect x="192" y="227" width="5" height="1" fill="#ddd"/><rect x="194" y="243" width="3" height="1" fill="#ddd"/><rect x="192" y="260" width="5" height="1" fill="#ddd"/><rect x="194" y="277" width="3" height="1" fill="#ddd"/><rect x="192" y="293" width="5" height="1" fill="#ddd"/><rect x="194" y="310" width="3" height="1" fill="#ddd"/><rect x="185" y="327" width="12" height="1" fill="#ddd"/><text x="185.5" y="336.3" font-size="9.5" fill="#c8d0dc" font-family="Liberation Sans">2</text><text x="185.5" y="345.1" font-size="9.5" fill="#c8d0dc" font-family="Liberation Sans">5</text><text x="185.5" y="353.90000000000003" font-size="9.5" fill="#c8d0dc" font-family="Liberation Sans">0</text><rect x="194" y="343" width="3" height="1" fill="#ddd"/><rect x="192" y="360" width="5" height="1" fill="#ddd"/><rect x="194" y="377" width="3" height="1" fill="#ddd"/><rect x="192" y="393" width="5" height="1" fill="#ddd"/><rect x="194" y="410" width="3" height="1" fill="#ddd"/><rect x="192" y="427" width="5" height="1" fill="#ddd"/><rect x="194" y="443" width="3" height="1" fill="#ddd"/><rect x="192" y="460" width="5" height="1" fill="#ddd"/><rect x="194" y="477" width="3" height="1" fill="#ddd"/><rect x="185" y="493" width="12" height="1" fill="#ddd"/><text x="185.5" y="502.3" font-size="9.5" fill="#c8d0dc" font-family="Liberation Sans">5</text><text x="185.5" y="511.1" font-size="9.5" fill="#c8d0dc" font-family="Liberation Sans">0</text><text x="185.5" y="519.9" font-size="9.5" fill="#c8d0dc" font-family="Liberation Sans">0</text><rect x="194" y="510" width="3" height="1" fill="#ddd"/><rect x="192" y="527" width="5" height="1" fill="#ddd"/><rect x="194" y="543" width="3" height="1" fill="#ddd"/><rect x="192" y="560" width="5" height="1" fill="#ddd"/><rect x="194" y="577" width="3" height="1" fill="#ddd"/><rect x="192" y="594" width="5" height="1" fill="#ddd"/><rect x="194" y="610" width="3" height="1" fill="#ddd"/><rect x="192" y="627" width="5" height="1" fill="#ddd"/><rect x="194" y="644" width="3" height="1" fill="#ddd"/><rect x="185" y="660" width="12" height="1" fill="#ddd"/><text x="185.5" y="669.3" font-size="9.5" fill="#c8d0dc" font-family="Liberation Sans">7</text><text x="185.5" y="678.0999999999999" font-size="9.5" fill="#c8d0dc" font-family="Liberation Sans">5</text><text x="185.5" y="686.9" font-size="9.5" fill="#c8d0dc" font-family="Liberation Sans">0</text><rect x="194" y="677" width="3" height="1" fill="#ddd"/><rect x="192" y="694" width="5" height="1" fill="#ddd"/><rect x="194" y="710" width="3" height="1" fill="#ddd"/><rect x="192" y="727" width="5" height="1" fill="#ddd"/><rect x="194" y="744" width="3" height="1" fill="#ddd"/><rect x="192" y="760" width="5" height="1" fill="#ddd"/><rect x="194" y="777" width="3" height="1" fill="#ddd"/><rect x="192" y="794" width="5" height="1" fill="#ddd"/><rect x="194" y="810" width="3" height="1" fill="#ddd"/><rect x="185" y="827" width="12" height="1" fill="#ddd"/><text x="185.5" y="836.3" font-size="9.5" fill="#c8d0dc" font-family="Liberation Sans">1</text><text x="185.5" y="845.0999999999999" font-size="9.5" fill="#c8d0dc" font-family="Liberation Sans">0</text><text x="185.5" y="853.9" font-size="9.5" fill="#c8d0dc" font-family="Liberation Sans">0</text><text x="185.5" y="862.6999999999999" font-size="9.5" fill="#c8d0dc" font-family="Liberation Sans">0</text><rect x="194" y="844" width="3" height="1" fill="#ddd"/><rect x="192" y="860" width="5" height="1" fill="#ddd"/><rect x="194" y="877" width="3" height="1" fill="#ddd"/><rect x="192" y="894" width="5" height="1" fill="#ddd"/><rect x="194" y="910" width="3" height="1" fill="#ddd"/><rect x="192" y="927" width="5" height="1" fill="#ddd"/><rect x="194" y="944" width="3" height="1" fill="#ddd"/><rect x="192" y="960" width="5" height="1" fill="#ddd"/><rect x="194" y="977" width="3" height="1" fill="#ddd"/><rect x="185" y="994" width="12" height="1" fill="#ddd"/><text x="185.5" y="1003.3" font-size="9.5" fill="#c8d0dc" font-family="Liberation Sans">1</text><text x="185.5" y="1012.0999999999999" font-size="9.5" fill="#c8d0dc" font-family="Liberation Sans">2</text><text x="185.5" y="1020.9" font-size="9.5" fill="#c8d0dc" font-family="Liberation Sans">5</text><text x="185.5" y="1029.7" font-size="9.5" fill="#c8d0dc" font-family="Liberation Sans">0</text><rect x="194" y="1010" width="3" height="1" fill="#ddd"/><path d="M193,579 L197,583.5 L193,588 Z" fill="#ddd"/><rect x="1500" y="126" width="12" height="12" fill="#bbb"/><circle cx="1506" cy="132" r="4" fill="#777" stroke="#444" stroke-width="1.4"/><path d="M1508,134 L1511,137" stroke="#444" stroke-width="1.6"/></svg>
<div class="a" style="left:1516px;top:122px;width:1px;height:958px;background:#575757"></div>
<div class="a chk" style="left:264px;top:160px;width:1169px;height:851px"></div>
<div class="a" style="left:264px;top:160px;width:1169px;height:1px;background:repeating-linear-gradient(90deg,#ff0 0 4px,#000 4px 8px);background-position:0px 0px"></div>
<div class="a" style="left:264px;top:1010px;width:1169px;height:1px;background:repeating-linear-gradient(90deg,#ff0 0 4px,#000 4px 8px);background-position:-2px -2px"></div>
<div class="a" style="left:264px;top:160px;width:1px;height:851px;background:repeating-linear-gradient(180deg,#ff0 0 4px,#000 4px 8px);background-position:0px 0px"></div>
<div class="a" style="left:1432px;top:160px;width:1px;height:851px;background:repeating-linear-gradient(180deg,#ff0 0 4px,#000 4px 8px);background-position:0px 0px"></div>
<div class="a" style="left:1498px;top:142px;width:15px;height:888px;background:#5c5c5c;border:1px solid #222;border-radius:3px"></div>
<div class="a" style="left:202px;top:1031px;width:1296px;height:15px;background:#5c5c5c;border:1px solid #222;border-radius:3px"></div>
<svg class="a" style="left:1498px;top:1030px" width="18" height="18"><path d="M9,2 L17,17 L9,13 L1,17 Z" fill="#c8c8c8"/></svg>
<div class="a" style="left:185px;top:1033px;width:12px;height:12px;border:1px dashed #bbb;background:#555"></div>
<div class="cbx" style="left:278px;top:1049px;width:47px;height:28px"></div>
<div class="t" style="left:285px;top:1058px;color:#d8d8d8">px</div>
<div class="a" style="left:326px;top:1049px;width:34px;height:28px;background:#353535"></div>
<div class="a" style="left:328px;top:1055px;width:30px;height:17px;background:#262626"></div>
<div class="t" style="left:328px;top:1058px;color:#cfd8e8">66.7 %</div>
<div class="cbx" style="left:360px;top:1049px;width:18px;height:28px"></div>
<svg class="a" style="left:278px;top:1049px" width="100" height="28"><path d="M26,12 L31,17 L36,12 M86,12 L91,17 L96,12" fill="none" stroke="#d8d8d8" stroke-width="1.6"/></svg>
<div class="t" style="left:380px;top:1057px;font-size:13px;color:#d8d8d8">GreyLayer (103.0 MB)</div>
<svg class="a" style="left:0;top:0" width="1440" height="1020"><defs><pattern id="pA" width="5" height="5" patternUnits="userSpaceOnUse" patternTransform="rotate(-42)"><rect width="5" height="5" fill="#000"/><rect y="3" width="5" height="1.4" fill="#fff"/></pattern><pattern id="pB" width="5" height="5.5" patternUnits="userSpaceOnUse" patternTransform="rotate(-58)"><rect width="5" height="1.9" fill="#000"/><rect y="1.9" width="5" height="2" fill="#fff"/></pattern><pattern id="pC" width="5" height="5" patternUnits="userSpaceOnUse" patternTransform="rotate(-60)"><rect width="5" height="2" fill="#000"/><rect y="2" width="5" height="1.2" fill="#fff"/></pattern></defs><path d="M728,369 C750,365 775,367 800,373 C830,381 860,396 885,415 C893,422 898,428 900,436 L899,458 C893,466 888,470 883,470 L868,463 L858,458 L843,450 L830,455 L815,459 L805,452 L790,447 L775,438 L760,428 L744,418 L730,405 L716,397 C722,385 730,376 742,374 Z" fill="url(#pB)"/><path d="M629,532 C630,500 638,465 652,432 C664,410 680,392 700,380 C712,373 720,370 728,369 L742,374 C728,382 718,392 714,405 C713,420 705,440 692,452 C680,468 670,480 660,492 C650,500 643,510 637,530 Z" fill="url(#pA)"/><path d="M703,405 L716,402 L700,460 Z" fill="url(#pC)"/><path d="M712,418 L722,412 L727,460 Z" fill="url(#pC)"/><path d="M722,412 L736,410 L748,463 Z" fill="url(#pC)"/><path d="M741,420 L756,423 L770,453 Z" fill="url(#pC)"/><path d="M760,428 L776,435 L790,452 Z" fill="url(#pC)"/><path d="M805,452 L823,452 L826,468 Z" fill="url(#pC)"/><path d="M843,450 L858,456 L862,470 Z" fill="url(#pC)"/><path d="M868,462 L883,468 L880,482 Z" fill="url(#pC)"/><path d="M655,488 L672,478 L650,510 Z" fill="url(#pC)"/><path d="M700,440 L710,444 L697,470 Z" fill="url(#pC)"/><path d="M716,616 C722,625 730,633 737,640 L729,656 L703,668 C704,655 706,642 716,616 Z" fill="url(#pC)"/><path d="M650,455 C665,425 685,398 712,380" fill="none" stroke="#000" stroke-width="4.5" stroke-linecap="round"/><path d="M645,490 C660,460 672,440 690,420" fill="none" stroke="#000" stroke-width="4.5" stroke-linecap="round"/><path d="M716,402 C745,415 780,432 812,455" fill="none" stroke="#000" stroke-width="4.5" stroke-linecap="round"/><path d="M705,380 C735,382 775,388 815,396" fill="none" stroke="#000" stroke-width="4.5" stroke-linecap="round"/><path d="M683,489 C690,478 702,473 716,475 C726,477 732,482 734,486 C728,492 718,498 705,498 C695,498 688,494 683,489 Z" fill="#000" stroke="#000" stroke-width="1.5"/><path d="M683,489 C690,478 702,473 716,475 C726,477 732,482 734,486 C728,492 718,498 705,498 C695,498 688,494 683,489 Z" fill="none" stroke="#fff" stroke-width="1" stroke-dasharray="2 5"/><path d="M790,481 C797,475 808,471 820,473 C828,475 833,479 833,483 C830,490 820,495 808,495 C800,495 794,489 790,481 Z" fill="#000" stroke="#000" stroke-width="1.5"/><path d="M790,481 C797,475 808,471 820,473 C828,475 833,479 833,483 C830,490 820,495 808,495 C800,495 794,489 790,481 Z" fill="none" stroke="#fff" stroke-width="1" stroke-dasharray="2 5"/><path d="M729,578 C745,573 765,570 790,572 C780,582 765,585 750,585 C740,585 733,583 729,578 Z" fill="#000" stroke="#000" stroke-width="1.5"/><path d="M729,578 C745,573 765,570 790,572 C780,582 765,585 750,585 C740,585 733,583 729,578 Z" fill="none" stroke="#fff" stroke-width="1" stroke-dasharray="2 5"/><path d="M725,369 C690,378 655,410 640,450 C630,478 627,510 630,540 C632,548 636,552 638,555" fill="none" stroke="#000" stroke-width="2.2" stroke-linecap="round"/><path d="M725,369 C690,378 655,410 640,450 C630,478 627,510 630,540 C632,548 636,552 638,555" fill="none" stroke="#fff" stroke-width="1.1" stroke-dasharray="2 4.5"/><path d="M898,432 C910,450 914,475 913,500 C912,520 908,532 902,545 C898,555 896,565 900,578 C904,600 910,620 919,646" fill="none" stroke="#000" stroke-width="2.2" stroke-linecap="round"/><path d="M898,432 C910,450 914,475 913,500 C912,520 908,532 902,545 C898,555 896,565 900,578 C904,600 910,620 919,646" fill="none" stroke="#fff" stroke-width="1.1" stroke-dasharray="2 4.5"/><path d="M636,558 C625,575 612,588 596,600 C572,618 552,638 541,660 C533,680 527,700 508,715 C495,722 482,716 481,722 C480,732 500,735 512,731 C530,722 544,708 556,683 C565,662 578,648 596,630 C620,606 640,592 664,584" fill="none" stroke="#000" stroke-width="2.2" stroke-linecap="round"/><path d="M636,558 C625,575 612,588 596,600 C572,618 552,638 541,660 C533,680 527,700 508,715 C495,722 482,716 481,722 C480,732 500,735 512,731 C530,722 544,708 556,683 C565,662 578,648 596,630 C620,606 640,592 664,584" fill="none" stroke="#fff" stroke-width="1.1" stroke-dasharray="2 4.5"/><path d="M490,725 C497,720 505,716 511,714" fill="none" stroke="#000" stroke-width="2.2" stroke-linecap="round"/><path d="M490,725 C497,720 505,716 511,714" fill="none" stroke="#fff" stroke-width="1.1" stroke-dasharray="2 4.5"/><path d="M651,591 C665,600 678,604 695,608 C705,611 713,613 720,616" fill="none" stroke="#000" stroke-width="2.2" stroke-linecap="round"/><path d="M651,591 C665,600 678,604 695,608 C705,611 713,613 720,616" fill="none" stroke="#fff" stroke-width="1.1" stroke-dasharray="2 4.5"/><path d="M715,579 C730,570 742,565 756,564 C770,563 785,566 797,571 C785,580 770,586 750,586 C735,586 725,583 715,579" fill="none" stroke="#000" stroke-width="2.2" stroke-linecap="round"/><path d="M715,579 C730,570 742,565 756,564 C770,563 785,566 797,571 C785,580 770,586 750,586 C735,586 725,583 715,579" fill="none" stroke="#fff" stroke-width="1.1" stroke-dasharray="2 4.5"/><path d="M736,585 C726,595 721,610 725,626 C730,638 745,648 764,652" fill="none" stroke="#000" stroke-width="2.2" stroke-linecap="round"/><path d="M736,585 C726,595 721,610 725,626 C730,638 745,648 764,652" fill="none" stroke="#fff" stroke-width="1.1" stroke-dasharray="2 4.5"/><path d="M768,587 C755,592 746,604 748,620 C752,632 765,636 780,632 C792,628 800,620 807,614" fill="none" stroke="#000" stroke-width="2.2" stroke-linecap="round"/><path d="M768,587 C755,592 746,604 748,620 C752,632 765,636 780,632 C792,628 800,620 807,614" fill="none" stroke="#fff" stroke-width="1.1" stroke-dasharray="2 4.5"/><path d="M756,603 C762,601 768,602 774,604" fill="none" stroke="#000" stroke-width="2.2" stroke-linecap="round"/><path d="M756,603 C762,601 768,602 774,604" fill="none" stroke="#fff" stroke-width="1.1" stroke-dasharray="2 4.5"/><path d="M818,554 C821,565 821,578 819,590 C816,605 810,620 805,640" fill="none" stroke="#000" stroke-width="2.2" stroke-linecap="round"/><path d="M818,554 C821,565 821,578 819,590 C816,605 810,620 805,640" fill="none" stroke="#fff" stroke-width="1.1" stroke-dasharray="2 4.5"/><path d="M859,548 C852,560 847,572 845,590 C843,606 843,622 844,638" fill="none" stroke="#000" stroke-width="2.2" stroke-linecap="round"/><path d="M859,548 C852,560 847,572 845,590 C843,606 843,622 844,638" fill="none" stroke="#fff" stroke-width="1.1" stroke-dasharray="2 4.5"/><path d="M844,612 C855,614 866,622 867,640 C867,655 857,664 843,668 C825,676 810,680 795,683 C765,688 735,690 707,690" fill="none" stroke="#000" stroke-width="2.2" stroke-linecap="round"/><path d="M844,612 C855,614 866,622 867,640 C867,655 857,664 843,668 C825,676 810,680 795,683 C765,688 735,690 707,690" fill="none" stroke="#fff" stroke-width="1.1" stroke-dasharray="2 4.5"/><path d="M848,640 C835,640 822,639 814,640 C795,643 780,647 764,651 C745,658 725,666 709,673 C695,682 680,690 669,700" fill="none" stroke="#000" stroke-width="2.2" stroke-linecap="round"/><path d="M848,640 C835,640 822,639 814,640 C795,643 780,647 764,651 C745,658 725,666 709,673 C695,682 680,690 669,700" fill="none" stroke="#fff" stroke-width="1.1" stroke-dasharray="2 4.5"/><path d="M655,723 C668,712 685,698 705,684" fill="none" stroke="#000" stroke-width="2.2" stroke-linecap="round"/><path d="M655,723 C668,712 685,698 705,684" fill="none" stroke="#fff" stroke-width="1.1" stroke-dasharray="2 4.5"/><path d="M664,728 C672,720 682,710 692,703" fill="none" stroke="#000" stroke-width="2.2" stroke-linecap="round"/><path d="M664,728 C672,720 682,710 692,703" fill="none" stroke="#fff" stroke-width="1.1" stroke-dasharray="2 4.5"/><path d="M668,712 L677,703 M672,719 L685,706 M677,723 L690,711 M686,704 L695,713 M690,718 L698,711" fill="none" stroke="#000" stroke-width="2.2" stroke-linecap="round"/><path d="M668,712 L677,703 M672,719 L685,706 M677,723 L690,711 M686,704 L695,713 M690,718 L698,711" fill="none" stroke="#fff" stroke-width="1.1" stroke-dasharray="2 4.5"/><path d="M845,603 C860,594 873,585 886,575" fill="none" stroke="#000" stroke-width="2.2" stroke-linecap="round"/><path d="M845,603 C860,594 873,585 886,575" fill="none" stroke="#fff" stroke-width="1.1" stroke-dasharray="2 4.5"/><path d="M873,587 C879,602 886,622 893,640" fill="none" stroke="#000" stroke-width="2.2" stroke-linecap="round"/><path d="M873,587 C879,602 886,622 893,640" fill="none" stroke="#fff" stroke-width="1.1" stroke-dasharray="2 4.5"/><path d="M683,719 C690,726 700,728 705,727 C715,726 721,721 720,713 C718,705 716,698 716,690 C735,687 752,685 770,684" fill="none" stroke="#000" stroke-width="2.2" stroke-linecap="round"/><path d="M683,719 C690,726 700,728 705,727 C715,726 721,721 720,713 C718,705 716,698 716,690 C735,687 752,685 770,684" fill="none" stroke="#fff" stroke-width="1.1" stroke-dasharray="2 4.5"/><path d="M770,502 C773,510 776,516 780,521 C784,526 788,530 791,533 C783,533 772,531 765,529" fill="none" stroke="#000" stroke-width="2.2" stroke-linecap="round"/><path d="M770,502 C773,510 776,516 780,521 C784,526 788,530 791,533 C783,533 772,531 765,529" fill="none" stroke="#fff" stroke-width="1.1" stroke-dasharray="2 4.5"/><path d="M739,529 C741,524 744,520 747,519 C749,525 752,526 756,524 C760,528 770,532 780,531" fill="none" stroke="#000" stroke-width="2.2" stroke-linecap="round"/><path d="M739,529 C741,524 744,520 747,519 C749,525 752,526 756,524 C760,528 770,532 780,531" fill="none" stroke="#fff" stroke-width="1.1" stroke-dasharray="2 4.5"/><path d="M661,521 C670,514 682,509 694,508" fill="none" stroke="#000" stroke-width="2.2" stroke-linecap="round"/><path d="M661,521 C670,514 682,509 694,508" fill="none" stroke="#fff" stroke-width="1.1" stroke-dasharray="2 4.5"/><path d="M812,498 C826,500 840,505 852,512" fill="none" stroke="#000" stroke-width="2.2" stroke-linecap="round"/><path d="M812,498 C826,500 840,505 852,512" fill="none" stroke="#fff" stroke-width="1.1" stroke-dasharray="2 4.5"/><path d="M795,683 C792,705 789,725 785,742 C780,762 774,778 767,791 C760,802 752,812 748,819 C746,826 746,832 750,836 C757,842 765,845 771,844 C780,840 788,837 795,838 C805,840 815,846 826,846 C835,846 842,840 848,840 C858,840 868,841 877,840 C882,836 882,832 881,827 C874,810 866,800 860,789 C853,773 848,758 846,742 C843,720 843,695 843,670" fill="none" stroke="#000" stroke-width="2.2" stroke-linecap="round"/><path d="M795,683 C792,705 789,725 785,742 C780,762 774,778 767,791 C760,802 752,812 748,819 C746,826 746,832 750,836 C757,842 765,845 771,844 C780,840 788,837 795,838 C805,840 815,846 826,846 C835,846 842,840 848,840 C858,840 868,841 877,840 C882,836 882,832 881,827 C874,810 866,800 860,789 C853,773 848,758 846,742 C843,720 843,695 843,670" fill="none" stroke="#fff" stroke-width="1.1" stroke-dasharray="2 4.5"/><path d="M765,819 C778,820 790,819 801,820 C810,821 815,826 822,825 C831,823 840,820 848,820 C855,821 861,823 867,824" fill="none" stroke="#000" stroke-width="2.2" stroke-linecap="round"/><path d="M765,819 C778,820 790,819 801,820 C810,821 815,826 822,825 C831,823 840,820 848,820 C855,821 861,823 867,824" fill="none" stroke="#fff" stroke-width="1.1" stroke-dasharray="2 4.5"/><path d="M893,640 C897,655 900,668 905,679 C915,697 925,710 934,722 C938,728 940,734 941,737 C946,745 950,748 955,749 C962,751 968,752 974,751 C985,749 997,746 1006,741 C1004,736 998,731 985,726 C975,721 965,714 954,707 C945,700 938,690 934,681 C927,666 920,652 917,640" fill="none" stroke="#000" stroke-width="2.2" stroke-linecap="round"/><path d="M893,640 C897,655 900,668 905,679 C915,697 925,710 934,722 C938,728 940,734 941,737 C946,745 950,748 955,749 C962,751 968,752 974,751 C985,749 997,746 1006,741 C1004,736 998,731 985,726 C975,721 965,714 954,707 C945,700 938,690 934,681 C927,666 920,652 917,640" fill="none" stroke="#fff" stroke-width="1.1" stroke-dasharray="2 4.5"/><path d="M944,734 C950,731 957,728 964,728 C970,726 976,726 981,726" fill="none" stroke="#000" stroke-width="2.2" stroke-linecap="round"/><path d="M944,734 C950,731 957,728 964,728 C970,726 976,726 981,726" fill="none" stroke="#fff" stroke-width="1.1" stroke-dasharray="2 4.5"/><path d="M649,549 L651,556 M655,562 L657,566 M640,571 L646,578" fill="none" stroke="#000" stroke-width="2.2" stroke-linecap="round"/><path d="M649,549 L651,556 M655,562 L657,566 M640,571 L646,578" fill="none" stroke="#fff" stroke-width="1.1" stroke-dasharray="2 4.5"/></svg>
<div class="a" style="left:1517px;top:64px;width:2px;height:1016px;background:#3f3f3f"></div>
<div class="a" style="left:1519px;top:64px;width:1px;height:1016px;background:#575757"></div>
<div class="a" style="left:1520px;top:67px;width:24px;height:20px;background:#262626"></div>
<div class="a" style="left:1545px;top:67px;width:22px;height:20px;background:#262626"></div>
<div class="a" style="left:1569px;top:67px;width:22px;height:20px;background:#262626"></div>
<div class="a" style="left:1593px;top:67px;width:20px;height:20px;background:#262626"></div>
<div class="a" style="left:1638px;top:67px;width:22px;height:20px;background:#262626"></div>
<div class="a" style="left:1661px;top:67px;width:21px;height:20px;background:#262626"></div>
<div class="a" style="left:1614px;top:64px;width:23px;height:25px;background:#3b3b3b;border:1px solid #575757;border-bottom:none"></div>
<div class="a" style="left:1520px;top:88px;width:400px;height:295px;border:1px solid #575757;border-right:none;background:#3b3b3b"></div>
<div class="a" style="left:1615px;top:88px;width:21px;height:1px;background:#3b3b3b"></div>
<div class="a" style="left:1523px;top:68px;width:18px;height:18px;background:#000;padding:1px"><div style="width:16px;height:16px;background:radial-gradient(circle at 8px 8px,#000 0,#222 2px,#fff 7px)"></div></div>
<div class="a" style="left:1536px;top:79px;width:5px;height:6px;background:#7a9af0"></div><svg class="a" style="left:1532px;top:77px" width="8" height="8"><path d="M4,0 V8 M0,4 H8" stroke="#000" stroke-width="1.4"/></svg>
<div class="a" style="left:1547px;top:68px;width:18px;height:18px;background:#000;padding:1px"><div style="width:16px;height:16px;background:repeating-linear-gradient(90deg,#e88820 0,#ffc050 2px,#f0a030 4px,#ffd070 5px)"></div></div>
<div class="a" style="left:1571px;top:68px;width:18px;height:18px;background:#000;padding:1px"><div style="width:16px;height:16px;background:#fff;color:#000;font-weight:bold;font-size:11px;line-height:16px;text-align:center;letter-spacing:-.5px">Aa</div></div>
<div class="a" style="left:1595px;top:69px;width:16px;height:16px;background:#000;padding:1px"><div style="width:14px;height:14px;background:#e4eef8"></div></div><svg class="a" style="left:1597px;top:71px" width="8" height="8"><path d="M2,6 L4,1" stroke="#6080c0" stroke-width="1.2"/></svg>
<svg class="a" style="left:1614px;top:64px" width="23" height="25"><path d="M19.5,4.5 L11,15.5 L9.5,14 Z" fill="#bbb" stroke="#bbb" stroke-width="1.2" stroke-linejoin="round"/><path d="M3.5,22 C4,18 6,15.5 9,15 L11.5,17 C11,20.5 7.5,22 3.5,22Z" fill="#bbb"/></svg>
<div class="a" style="left:1639px;top:68px;width:19px;height:18px;background:linear-gradient(90deg,#000,rgba(0,0,0,0)),conic-gradient(#666 25%,#999 0 50%,#666 0 75%,#999 0);background-size:auto,9px 9px;border:1px solid #111"></div>
<svg class="a" style="left:1662px;top:69px" width="18" height="17"><rect x="0" y="6" width="17" height="11" fill="#ccc"/><g fill="#222"><circle cx="3" cy="9" r="1.3"/><circle cx="8" cy="9" r="1.3"/><circle cx="13" cy="9" r="1.3"/><circle cx="5.5" cy="13" r="1.3"/><circle cx="10.5" cy="13" r="1.3"/><circle cx="15" cy="13" r="1.3"/></g><g fill="#ccc"><circle cx="3" cy="4" r="1.3"/><circle cx="8" cy="4" r="1.3"/><circle cx="13" cy="4" r="1.3"/><circle cx="5.5" cy="1.5" r="1"/><circle cx="10.5" cy="1.5" r="1"/></g></svg>
<svg class="a" style="left:1903px;top:70px" width="12" height="12"><rect x="0.5" y="0.5" width="10" height="10" fill="none" stroke="#bbb"/><path d="M8,2.5 V8.5 L3,5.5 Z" fill="#bbb"/></svg>
<div class="a" style="left:1524px;top:92px;width:391px;height:16px;background:#202020"></div>
<div class="t" style="left:1526px;top:95px;color:#dcdcdc">2. Hardness 050</div>
<div class="a" style="left:1523px;top:111px;width:393px;height:135px;background:#fff"></div>
<div class="a" style="left:1695px;top:154px;width:50px;height:50px;background:radial-gradient(circle at 25px 24.5px,#000 0,#1a1a1a 4px,#555 9px,#aaa 14px,#e8e8e8 19px,#fff 24px)"></div>
<svg class="a" style="left:1905px;top:236px" width="10" height="10"><path d="M10,0 L10,10 L0,10 Z" fill="#6a8af0"/></svg>
<div class="a" style="left:1520px;top:246px;width:400px;height:137px;background:#3b3b3b;border-left:1px solid #575757;border-bottom:1px solid #575757"></div>
<div class="t" style="left:1522px;top:255px;color:#bdbdbd">Shape:</div>
<div class="a" style="left:1558px;top:247px;width:26px;height:25px;background:#2b2b2b;border:1px solid #1f1f1f;border-radius:3px"></div>
<svg class="a" style="left:1558px;top:247px" width="80" height="26"><circle cx="13" cy="13" r="5.5" fill="#c8c8c8"/><rect x="33" y="8" width="12" height="11" fill="#c8c8c8"/><path d="M65,7 L71,13 L65,19 L59,13 Z" fill="#c8c8c8"/></svg>
<div class="a" style="left:1522px;top:276px;width:395px;height:15px;background:#353535;border:1px solid #414141"></div><div class="a" style="left:1523px;top:277px;width:8px;height:13px;background:#5a5a5a"></div><div class="a" style="left:1531px;top:277px;width:2px;height:13px;background:#151515"></div><div class="t" style="left:1524px;top:278px;color:#4e4e4e">Radius</div><div class="t" style="left:1524px;top:278px;color:#e0e0e0">R</div><div class="t" style="left:1800px;width:103px;text-align:right;top:278px;color:#4e4e4e">25.0</div><svg class="a" style="left:1905px;top:276px" width="10" height="15"><path d="M2,5 L5,2 L8,5 M2,10 L5,13 L8,10" fill="none" stroke="#555" stroke-width="1.5"/></svg>
<div class="a" style="left:1522px;top:294px;width:395px;height:15px;background:#353535;border:1px solid #414141"></div><div class="t" style="left:1524px;top:296px;color:#4e4e4e">Spikes</div><div class="t" style="left:1800px;width:103px;text-align:right;top:296px;color:#4e4e4e">2</div><svg class="a" style="left:1905px;top:294px" width="10" height="15"><path d="M2,5 L5,2 L8,5 M2,10 L5,13 L8,10" fill="none" stroke="#555" stroke-width="1.5"/></svg>
<div class="a" style="left:1522px;top:312px;width:395px;height:15px;background:#353535;border:1px solid #414141"></div><div class="a" style="left:1523px;top:313px;width:190px;height:13px;background:#5a5a5a"></div><div class="a" style="left:1713px;top:313px;width:2px;height:13px;background:#151515"></div><div class="t" style="left:1524px;top:314px;color:#e0e0e0">Hardness</div><div class="t" style="left:1800px;width:103px;text-align:right;top:314px;color:#4e4e4e">0.50</div><svg class="a" style="left:1905px;top:312px" width="10" height="15"><path d="M2,5 L5,2 L8,5 M2,10 L5,13 L8,10" fill="none" stroke="#555" stroke-width="1.5"/></svg>
<div class="a" style="left:1522px;top:330px;width:395px;height:15px;background:#353535;border:1px solid #414141"></div><div class="t" style="left:1524px;top:332px;color:#4e4e4e">Aspect ratio</div><div class="t" style="left:1800px;width:103px;text-align:right;top:332px;color:#4e4e4e">1.0</div><svg class="a" style="left:1905px;top:330px" width="10" height="15"><path d="M2,5 L5,2 L8,5 M2,10 L5,13 L8,10" fill="none" stroke="#555" stroke-width="1.5"/></svg>
<div class="a" style="left:1522px;top:348px;width:395px;height:15px;background:#353535;border:1px solid #414141"></div><div class="t" style="left:1524px;top:350px;color:#4e4e4e">Angle</div><div class="t" style="left:1800px;width:103px;text-align:right;top:350px;color:#4e4e4e">0.0</div><svg class="a" style="left:1905px;top:348px" width="10" height="15"><path d="M2,5 L5,2 L8,5 M2,10 L5,13 L8,10" fill="none" stroke="#555" stroke-width="1.5"/></svg>
<div class="a" style="left:1522px;top:366px;width:395px;height:15px;background:#353535;border:1px solid #414141"></div><div class="a" style="left:1523px;top:367px;width:15px;height:13px;background:#5a5a5a"></div><div class="a" style="left:1538px;top:367px;width:2px;height:13px;background:#151515"></div><div class="t" style="left:1524px;top:368px;color:#4e4e4e">Spacing</div><div class="t" style="left:1524px;top:368px;color:#e0e0e0;width:13px;overflow:hidden">Spa</div><div class="t" style="left:1800px;width:103px;text-align:right;top:368px;color:#4e4e4e">10.0</div><svg class="a" style="left:1905px;top:366px" width="10" height="15"><path d="M2,5 L5,2 L8,5 M2,10 L5,13 L8,10" fill="none" stroke="#555" stroke-width="1.5"/></svg>
<div class="a" style="left:1710px;top:384px;width:4px;height:2px;background:#aaa"></div><div class="a" style="left:1717px;top:384px;width:4px;height:2px;background:#aaa"></div><div class="a" style="left:1724px;top:384px;width:4px;height:2px;background:#aaa"></div>
<div class="a" style="left:1520px;top:387px;width:59px;height:24px;background:#3b3b3b;border:1px solid #575757;border-bottom:none"></div>
<div class="a" style="left:1579px;top:390px;width:69px;height:20px;background:#262626"></div><div class="a" style="left:1649px;top:390px;width:51px;height:20px;background:#262626"></div>
<div class="a" style="left:1520px;top:410px;width:400px;height:1px;background:#575757"></div><div class="a" style="left:1521px;top:410px;width:57px;height:1px;background:#3b3b3b"></div>
<svg class="a" style="left:1520px;top:387px" width="200" height="24"><g fill="#c8c8c8"><path d="M6,4 H18 L16,8 H4 Z"/><path d="M6,9.5 H18 L16,13.5 H4 Z"/><path d="M6,15 H18 L16,19 H4 Z"/></g>
<rect x="60.5" y="4.5" width="15" height="15" fill="none" stroke="#ccc"/><rect x="63" y="7" width="2" height="10" fill="#666"/><rect x="67" y="7" width="2" height="10" fill="#999"/><rect x="71" y="7" width="2" height="10" fill="#ccc"/>
<path d="M131,18 C133,10 143,10 145,18" fill="none" stroke="#ccc" stroke-width="2.2"/><rect x="129" y="6" width="5" height="4" fill="#ccc"/><rect x="142" y="6" width="5" height="4" fill="#ccc"/><path d="M133,8 L138,12 L143,8" fill="none" stroke="#ccc" stroke-width="1.4"/></svg>
<div class="t" style="left:1540px;top:394px;color:#dcdcdc">Layers</div><div class="t" style="left:1598px;top:395px;color:#dcdcdc">Channels</div><div class="t" style="left:1668px;top:395px;color:#dcdcdc">Paths</div>
<svg class="a" style="left:1903px;top:393px" width="12" height="12"><rect x="0.5" y="0.5" width="10" height="10" fill="none" stroke="#bbb"/><path d="M8,2.5 V8.5 L3,5.5 Z" fill="#bbb"/></svg>
<div class="a" style="left:1520px;top:411px;width:400px;height:640px;background:#3b3b3b"></div>
<div class="cbx" style="left:1522px;top:413px;width:348px;height:28px"></div><div class="cbx" style="left:1872px;top:413px;width:44px;height:28px"></div>
<div class="t" style="left:1529px;top:422px;color:#dcdcdc">Mode</div><div class="t" style="left:1808px;top:422px;color:#dcdcdc">Normal</div>
<svg class="a" style="left:1800px;top:413px" width="120" height="28"><g fill="none" stroke="#d8d8d8" stroke-width="1.6"><path d="M51,11 L56,16 L61,11"/><path d="M100,11 L105,16 L110,11"/><path d="M81.5,12.5 A5,5 0 1 1 85.2,19.1"/></g><path d="M78,12 L85,12 L81.5,16 Z" fill="#d8d8d8"/><circle cx="82" cy="19.8" r="1.9" fill="#d8d8d8"/></svg>
<div class="a" style="left:1522px;top:442px;width:394px;height:16px;background:#555;border:1px solid #6a6a6a"></div><div class="a" style="left:1902px;top:443px;width:1px;height:14px;background:#111"></div>
<div class="t" style="left:1524px;top:445px;color:#dcdcdc">Opacity</div><div class="t" style="left:1840px;width:62px;text-align:right;top:445px;color:#dcdcdc">100.0</div>
<svg class="a" style="left:1904px;top:442px" width="12" height="16"><path d="M3,6 L6,3 L9,6" fill="none" stroke="#888" stroke-width="1.5"/><path d="M3,10 L6,13 L9,10" fill="none" stroke="#ddd" stroke-width="1.5"/></svg>
<div class="t" style="left:1522px;top:467px;color:#dcdcdc">Lock:</div>
<svg class="a" style="left:1555px;top:462px" width="75" height="20"><path d="M15,2 L7,13 L8,14 Z" fill="#c8c8c8"/><path d="M2,18 C3,15 5,13 7,13 L9,15 C8,17 5,18 2,18Z" fill="#c8c8c8"/>
<path d="M35,3 V17 M28,10 H42" stroke="#c8c8c8" stroke-width="1.6"/><path d="M35,1 l-2.5,3 h5z M35,19 l-2.5,-3 h5z M26,10 l3,-2.5 v5z M44,10 l-3,-2.5 v5z" fill="#c8c8c8"/>
<rect x="55" y="2" width="16" height="16" fill="#bbb"/><g fill="#777"><rect x="59" y="2" width="4" height="4"/><rect x="67" y="2" width="4" height="4"/><rect x="55" y="6" width="4" height="4"/><rect x="63" y="6" width="4" height="4"/><rect x="59" y="10" width="4" height="4"/><rect x="67" y="10" width="4" height="4"/><rect x="55" y="14" width="4" height="4"/><rect x="63" y="14" width="4" height="4"/></g></svg>
<div class="a" style="left:1522px;top:486px;width:395px;height:565px;background:#303030;border-radius:0 0 4px 4px"></div>
<div class="a" style="left:1523px;top:486px;width:394px;height:31px;background:#222"></div>
<svg class="a" style="left:1526px;top:494px" width="22" height="16"><path d="M1,8 C5,2 17,2 21,8 C17,14 5,14 1,8 Z" fill="#ddd"/><circle cx="11" cy="8" r="4" fill="#303030"/><circle cx="11" cy="8" r="2.2" fill="#ddd"/></svg>
<div class="a" style="left:1598px;top:488px;width:36px;height:27px;background:#fff;padding:2px;border-radius:2px"><div class="chk" style="width:32px;height:23px;background-size:8px 8px"></div></div>
<div class="t" style="left:1638px;top:496px;color:#dcdcdc">GreyLayer</div>
<svg class="a" style="left:1526px;top:525px" width="22" height="16"><path d="M1,8 C5,2 17,2 21,8 C17,14 5,14 1,8 Z" fill="#ddd"/><circle cx="11" cy="8" r="4" fill="#303030"/><circle cx="11" cy="8" r="2.2" fill="#ddd"/></svg>
<div class="a" style="left:1598px;top:519px;width:36px;height:27px;background:#000;padding:2px;border-radius:0"><div class="chk" style="width:32px;height:23px;background-size:8px 8px"></div></div>
<div class="t" style="left:1638px;top:527px;color:#dcdcdc">Babyhead.png</div>
<svg class="a" style="left:1600px;top:521px" width="32" height="23"><g fill="none" stroke="#bdbdbd" stroke-width="1.2" opacity=".7"><path d="M12,5 C14,3 18,3 19,6 C20,9 18,12 16,12"/><path d="M9,17 L13,12 M15,13 L18,18 M20,12 L22,16"/><path d="M14,18 L15,21 L19,21"/></g></svg>
<div class="a" style="left:1520px;top:1051px;width:400px;height:28px;background:#3c3c3c"></div>
<svg class="a" style="left:1520px;top:1051px" width="400" height="28"><g fill="none" stroke="#c8c8c8" stroke-width="1.4">
<path d="M22,7 H29 L33,11 V20 H22 Z"/><path d="M117,16 L124,9 L131,16 M166,10 L173,17 L180,10" stroke-width="2"/>
<rect x="216" y="6" width="9" height="8"/><path d="M219,14 V19 H230 V11 H225"/></g>
<g fill="#c8c8c8"><rect x="17" y="7" width="9" height="2"/><rect x="20.5" y="3.5" width="2" height="9"/>
<path d="M67,5 H73 L75,7 H83 V20 H67 Z"/><path d="M73,12 H77 V9 H79 V12 H82 V14 H79 V17 H77 V14 H73 Z" fill="#3c3c3c"/>
<path d="M265,8 H273 L271,11 H263 Z M265,12 H273 L271,15 H263 Z M265,16 H273 L271,19 H263 Z"/><path d="M276,6 H278 V15 L281,12 L277,19 L273,12 L276,15 Z"/>
<path d="M318,5 H326 V11 C326,14 318,14 318,11 Z"/><path d="M312,20 L316,15 H331 L327,20 Z"/>
<rect x="362" y="5" width="16" height="16" rx="1.5"/></g>
<path d="M365,8 L375,18 M375,8 L365,18" stroke="#3c3c3c" stroke-width="2.4"/></svg>
</body></html>
